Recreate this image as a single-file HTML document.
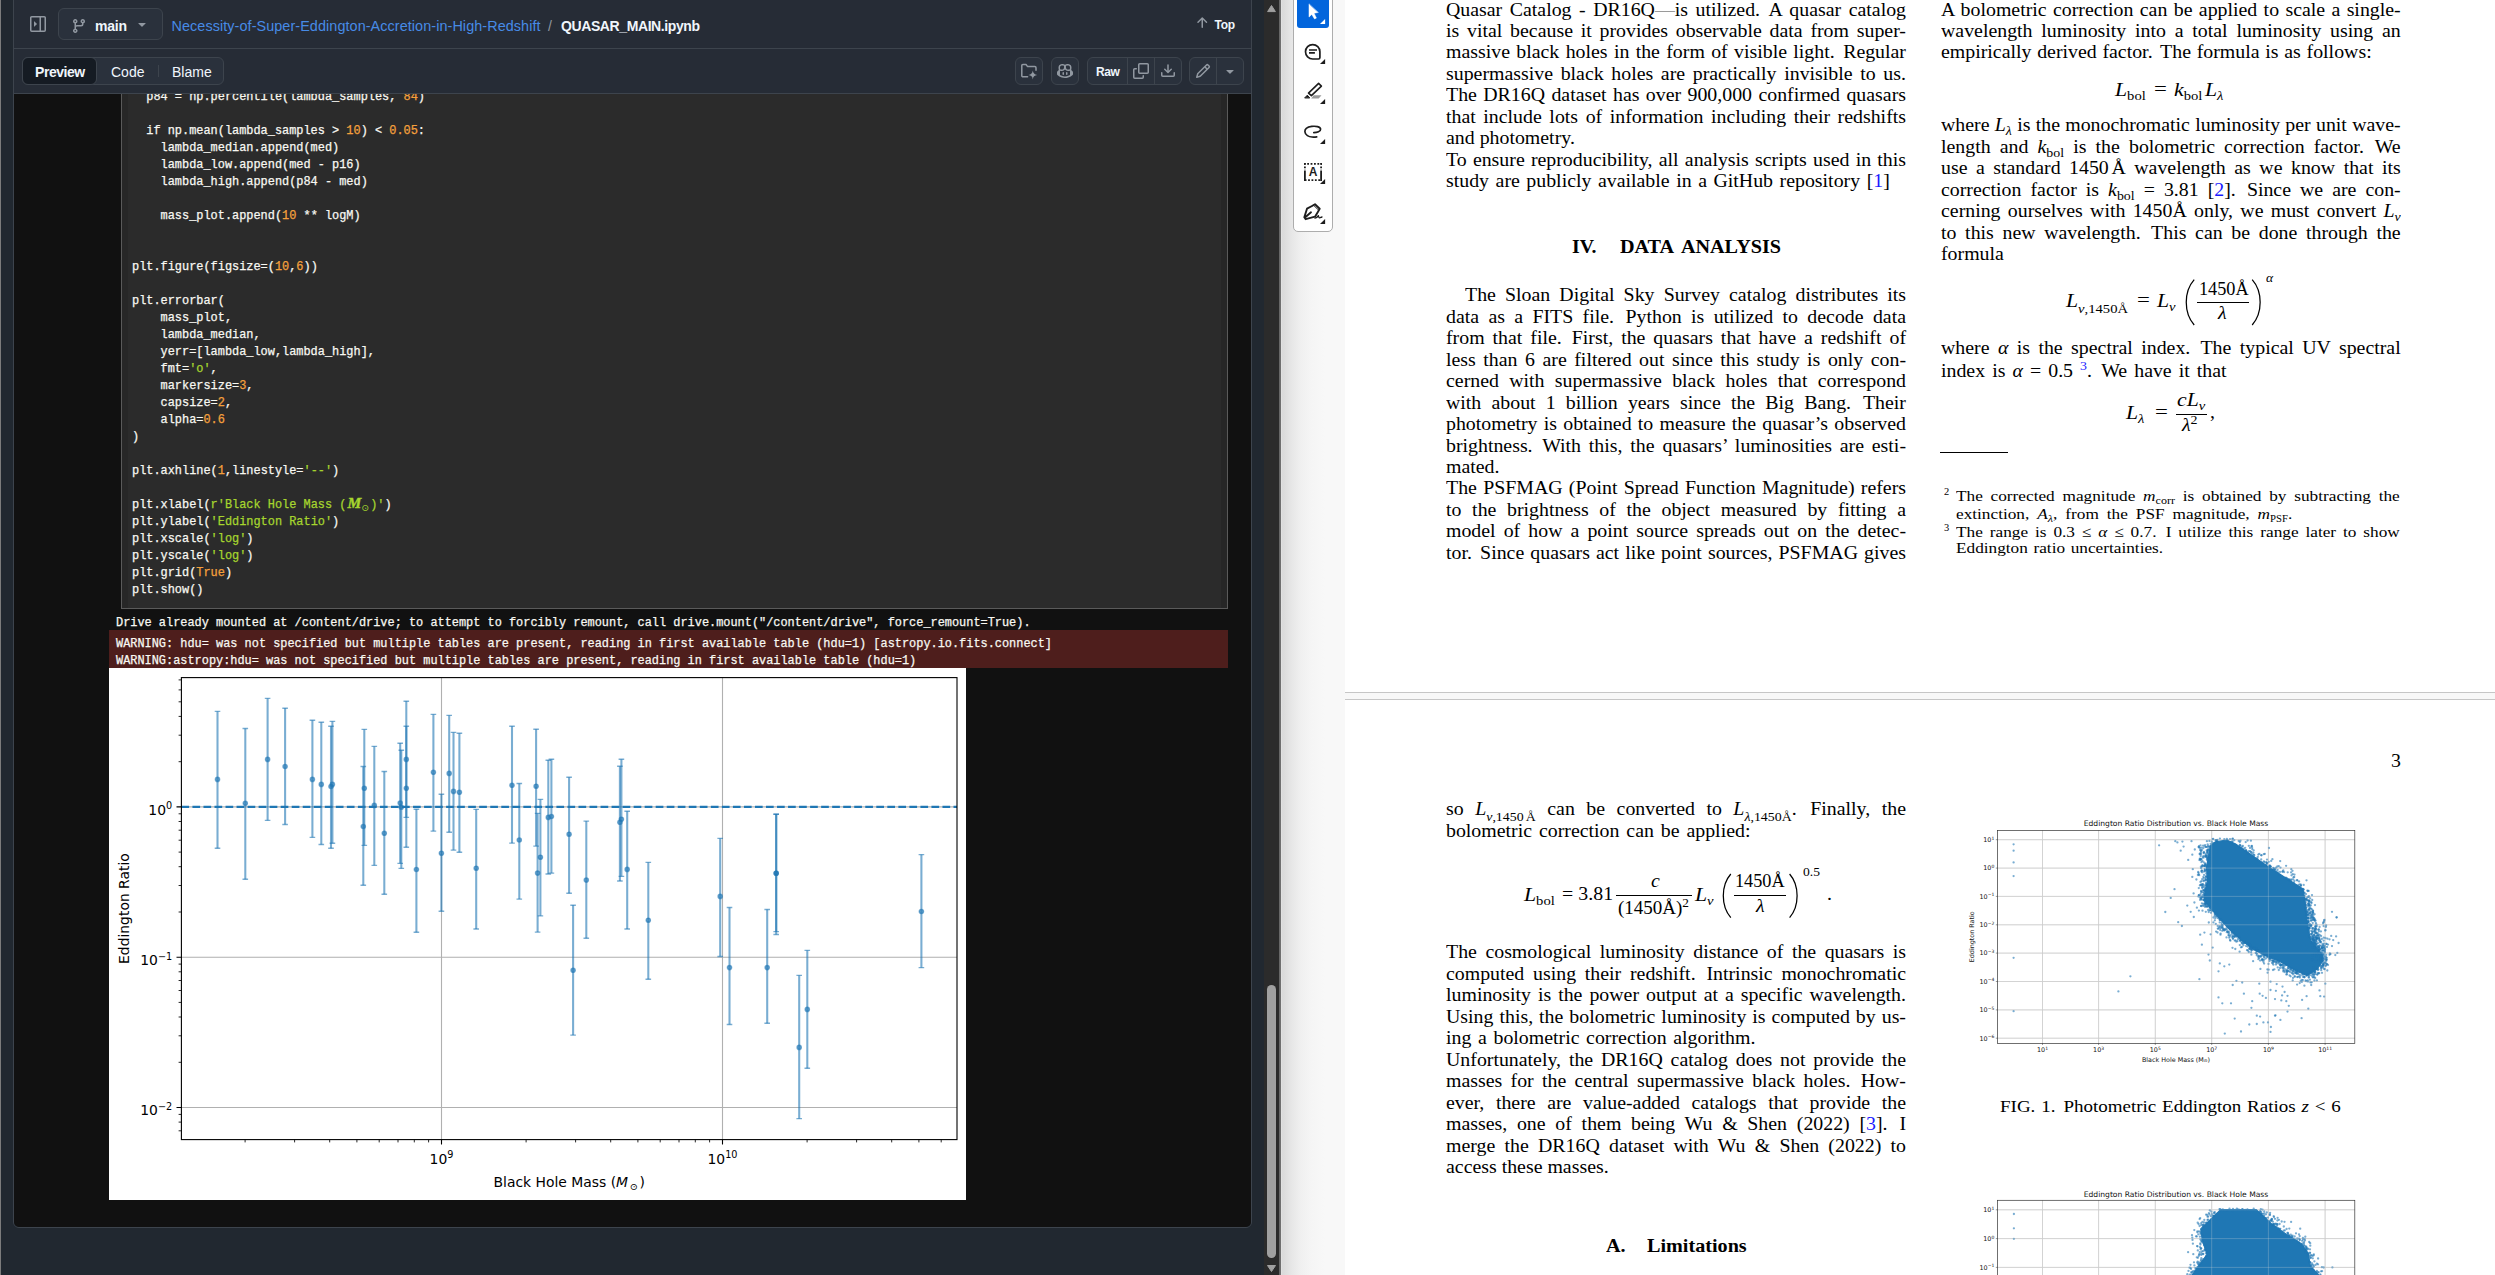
<!DOCTYPE html>
<html lang="en">
<head>
<meta charset="utf-8">
<title>QUASAR_MAIN.ipynb</title>
<style>
*{box-sizing:border-box;margin:0;padding:0}
html,body{width:2495px;height:1275px;overflow:hidden;background:#212830}
body{position:relative;font-family:"Liberation Sans",sans-serif;color:#f0f6fc}
.abs{position:absolute}
/* ---------- left : GitHub notebook view ---------- */
#gh{position:absolute;left:0;top:0;width:1264px;height:1275px;background:#212830;overflow:hidden}
#edge{position:absolute;left:0;top:0;width:1px;height:1275px;background:#7c7c7c}
#panel{position:absolute;left:13px;top:-8px;width:1239px;height:1236px;border:1px solid #3d444d;border-radius:6px;background:#212830}
#hdrline{position:absolute;left:14px;top:48px;width:1237px;height:1px;background:#3d444d}
#tbline{position:absolute;left:14px;top:93px;width:1237px;height:1px;background:#3d444d}
#nb{position:absolute;left:14px;top:94px;width:1237px;height:1133px;background:#111111;border-radius:0 0 5px 5px;overflow:hidden}
.btn{position:absolute;border:1px solid #3d444d;background:#2a313c;border-radius:6px}
.ico{position:absolute;width:16px;height:16px;fill:#9198a1}
.ui{position:absolute;white-space:nowrap;line-height:20px;font-size:14px}
.b{font-weight:bold}
#crumb{left:171.5px;top:16px;color:#478be6;font-size:14.4px;letter-spacing:0.08px}
#cell{position:absolute;left:107px;top:-20px;width:1107px;height:535px;background:#2b2b2b;border:1px solid #5a5a5a}
#cell:before{content:"";position:absolute;left:0;top:0;width:6px;height:100%;background:#272727}
#cell:after{content:"";position:absolute;right:0;top:0;width:6px;height:100%;background:#262626}
pre{font-family:"Liberation Mono",monospace;font-size:11.92px;line-height:17px;color:#f8f8f2;position:absolute;white-space:pre;-webkit-text-stroke:0.25px currentColor}
.n{color:#f5a03c}.s{color:#a6d52e}
.mj{font-family:"Liberation Serif",serif;font-style:italic;font-weight:bold;font-size:15.5px;line-height:0;letter-spacing:0;-webkit-text-stroke:0.4px currentColor;padding-left:1px}
.mo{font-size:9.5px;line-height:0;vertical-align:-3px;font-family:"DejaVu Sans",sans-serif;-webkit-text-stroke:0;padding-right:1px}
#err{position:absolute;left:95px;top:536px;width:1119px;height:38px;background:#4e1e1c}
#sb{position:absolute;left:1264px;top:0;width:15px;height:1275px;background:#2b2b2b}
#sbthumb{position:absolute;left:1267px;top:985px;width:9px;height:273px;border-radius:5px;background:#a0a0a0}
#divider{position:absolute;left:1279px;top:0;width:2px;height:1275px;background:linear-gradient(90deg,#4a4a4a 0,#787878 0.8px,#6a6a6a 100%)}
/* ---------- right : PDF viewer ---------- */
#gut{position:absolute;left:1281px;top:0;width:64px;height:1275px;background:linear-gradient(90deg,#e4e4e4 0,#dadada 1.6px,#e6e6e6 10px,#f0f0f0 20px,#f5f5f5 30px,#f8f8f8 44px,#f8f8f8 100%)}
#tools{position:absolute;left:1293px;top:-10px;width:40px;height:242px;background:#fff;border:1px solid #adadad;border-radius:0 0 5px 5px}
#sel{position:absolute;left:1297px;top:-4px;width:32px;height:32px;border-radius:3px;background:#0265dc}
#pg1{position:absolute;left:1345px;top:0;width:1150px;height:693px;background:#fff;border-bottom:1px solid #c6c6c6}
#pggap{position:absolute;left:1345px;top:693px;width:1150px;height:6px;background:#f8f8f8}
#pg2{position:absolute;left:1345px;top:699px;width:1150px;height:576px;background:#fff;border-top:1px solid #c6c6c6}
.tx{position:absolute;font-family:"Liberation Serif",serif;color:#000;white-space:nowrap;transform:scaleX(1.045);transform-origin:0 0}
.ln{position:absolute;font-family:"Liberation Serif",serif;color:#000;font-size:19px;line-height:22px;height:22px;text-align:justify;text-align-last:justify;white-space:nowrap;transform-origin:0 0}
.ln.l{text-align:left;text-align-last:left}
.fn{font-size:15px}
.sp{display:inline-block;width:2px}
.ln i,.tx i{font-style:italic}
.ln sub,.tx sub,.ln sup,.tx sup{font-size:70%;line-height:0;}
.ln sub,.tx sub{vertical-align:-0.28em}
.ln sub.d{vertical-align:-0.42em}
.lk{color:#1a1aff}
.em{color:#9a9a9a}
i.m{font-size:104%}
svg text{white-space:pre}
</style>
</head>
<body>
<div id="gh">
<div id="panel"></div>
<div id="nb">
 <div id="cell">
<pre style="left:10px;top:13.7px">  p84 = np.percentile(lambda_samples, <span class="n">84</span>)

  if np.mean(lambda_samples &gt; <span class="n">10</span>) &lt; <span class="n">0.05</span>:
    lambda_median.append(med)
    lambda_low.append(med - p16)
    lambda_high.append(p84 - med)

    mass_plot.append(<span class="n">10</span> ** logM)


plt.figure(figsize=(<span class="n">10</span>,<span class="n">6</span>))

plt.errorbar(
    mass_plot,
    lambda_median,
    yerr=[lambda_low,lambda_high],
    fmt=<span class="s">'o'</span>,
    markersize=<span class="n">3</span>,
    capsize=<span class="n">2</span>,
    alpha=<span class="n">0.6</span>
)

plt.axhline(<span class="n">1</span>,linestyle=<span class="s">'--'</span>)

plt.xlabel(<span class="s">r'Black Hole Mass (<span class="mj">M</span><span class="mo">⊙</span>)'</span>)
plt.ylabel(<span class="s">'Eddington Ratio'</span>)
plt.xscale(<span class="s">'log'</span>)
plt.yscale(<span class="s">'log'</span>)
plt.grid(<span class="n">True</span>)
plt.show()</pre>
 </div>
<pre style="left:102px;top:520.5px">Drive already mounted at /content/drive; to attempt to forcibly remount, call drive.mount("/content/drive", force_remount=True).</pre>
 <div id="err"></div>
<pre style="left:102px;top:542.1px;line-height:16.4px">WARNING: hdu= was not specified but multiple tables are present, reading in first available table (hdu=1) [astropy.io.fits.connect]
WARNING:astropy:hdu= was not specified but multiple tables are present, reading in first available table (hdu=1)</pre>
 <svg class="abs" style="left:95px;top:574px" width="857" height="532" viewBox="109 668 857 532" font-family="DejaVu Sans, sans-serif" font-size="13.9">
<rect x="109" y="668" width="857" height="532" fill="#fff"/>
<path d="M441.5 677.6V1139.6M722.5 677.6V1139.6M181.4 806.9H957.0M181.4 957.2H957.0M181.4 1107.5H957.0" stroke="#b0b0b0" stroke-width="1.1" fill="none"/>
<path d="M441.5 1139.6v4.9M722.5 1139.6v4.9M181.4 806.9h-4.9M181.4 957.2h-4.9M181.4 1107.5h-4.9" stroke="#000" stroke-width="1.1" fill="none"/>
<path d="M245.1 1139.6v2.8M294.6 1139.6v2.8M329.7 1139.6v2.8M356.9 1139.6v2.8M379.2 1139.6v2.8M398 1139.6v2.8M414.3 1139.6v2.8M428.6 1139.6v2.8M526.1 1139.6v2.8M575.6 1139.6v2.8M610.7 1139.6v2.8M637.9 1139.6v2.8M660.2 1139.6v2.8M679 1139.6v2.8M695.3 1139.6v2.8M709.6 1139.6v2.8M807.1 1139.6v2.8M856.6 1139.6v2.8M891.7 1139.6v2.8M918.9 1139.6v2.8M941.2 1139.6v2.8M181.4 761.7h-2.8M181.4 735.2h-2.8M181.4 716.4h-2.8M181.4 701.8h-2.8M181.4 689.9h-2.8M181.4 679.9h-2.8M181.4 912h-2.8M181.4 885.5h-2.8M181.4 866.7h-2.8M181.4 852.1h-2.8M181.4 840.2h-2.8M181.4 830.2h-2.8M181.4 821.5h-2.8M181.4 813.8h-2.8M181.4 1062.3h-2.8M181.4 1035.8h-2.8M181.4 1017h-2.8M181.4 1002.4h-2.8M181.4 990.5h-2.8M181.4 980.5h-2.8M181.4 971.8h-2.8M181.4 964.1h-2.8M181.4 1130.8h-2.8M181.4 1122.1h-2.8M181.4 1114.4h-2.8" stroke="#000" stroke-width="0.85" fill="none"/>
<g stroke="#1f77b4" fill="#1f77b4">
<path d="M217.5 711.4V848.3" stroke-width="2.08" fill="none" opacity="0.6"/><path d="M214.7 711.4h5.6M214.7 848.3h5.6" stroke-width="1.4" fill="none" opacity="0.6"/><circle cx="217.5" cy="779.4" r="2.1" stroke="none" opacity="0.6"/><circle cx="217.5" cy="779.4" r="2.1" fill="none" stroke-width="1.4" opacity="0.6"/>
<path d="M245.3 728.5V879.3" stroke-width="2.08" fill="none" opacity="0.6"/><path d="M242.5 728.5h5.6M242.5 879.3h5.6" stroke-width="1.4" fill="none" opacity="0.6"/><circle cx="245.3" cy="803.3" r="2.1" stroke="none" opacity="0.6"/><circle cx="245.3" cy="803.3" r="2.1" fill="none" stroke-width="1.4" opacity="0.6"/>
<path d="M267.6 698.4V820.4" stroke-width="2.08" fill="none" opacity="0.6"/><path d="M264.8 698.4h5.6M264.8 820.4h5.6" stroke-width="1.4" fill="none" opacity="0.6"/><circle cx="267.6" cy="759.4" r="2.1" stroke="none" opacity="0.6"/><circle cx="267.6" cy="759.4" r="2.1" fill="none" stroke-width="1.4" opacity="0.6"/>
<path d="M285.1 708.2V824.5" stroke-width="2.08" fill="none" opacity="0.6"/><path d="M282.3 708.2h5.6M282.3 824.5h5.6" stroke-width="1.4" fill="none" opacity="0.6"/><circle cx="285.1" cy="766.5" r="2.1" stroke="none" opacity="0.6"/><circle cx="285.1" cy="766.5" r="2.1" fill="none" stroke-width="1.4" opacity="0.6"/>
<path d="M312.4 720.3V837.4" stroke-width="2.08" fill="none" opacity="0.6"/><path d="M309.6 720.3h5.6M309.6 837.4h5.6" stroke-width="1.4" fill="none" opacity="0.6"/><circle cx="312.4" cy="779.4" r="2.1" stroke="none" opacity="0.6"/><circle cx="312.4" cy="779.4" r="2.1" fill="none" stroke-width="1.4" opacity="0.6"/>
<path d="M321.3 722.3V844.5" stroke-width="2.08" fill="none" opacity="0.6"/><path d="M318.5 722.3h5.6M318.5 844.5h5.6" stroke-width="1.4" fill="none" opacity="0.6"/><circle cx="321.3" cy="784.4" r="2.1" stroke="none" opacity="0.6"/><circle cx="321.3" cy="784.4" r="2.1" fill="none" stroke-width="1.4" opacity="0.6"/>
<path d="M331 726.2V848.3" stroke-width="2.08" fill="none" opacity="0.6"/><path d="M328.2 726.2h5.6M328.2 848.3h5.6" stroke-width="1.4" fill="none" opacity="0.6"/><circle cx="331" cy="786.5" r="2.1" stroke="none" opacity="0.6"/><circle cx="331" cy="786.5" r="2.1" fill="none" stroke-width="1.4" opacity="0.6"/>
<path d="M332.4 721.4V843.3" stroke-width="2.08" fill="none" opacity="0.6"/><path d="M329.6 721.4h5.6M329.6 843.3h5.6" stroke-width="1.4" fill="none" opacity="0.6"/><circle cx="332.4" cy="784.4" r="2.1" stroke="none" opacity="0.6"/><circle cx="332.4" cy="784.4" r="2.1" fill="none" stroke-width="1.4" opacity="0.6"/>
<path d="M364.3 729.4V845.4" stroke-width="2.08" fill="none" opacity="0.6"/><path d="M361.5 729.4h5.6M361.5 845.4h5.6" stroke-width="1.4" fill="none" opacity="0.6"/><circle cx="364.3" cy="788.3" r="2.1" stroke="none" opacity="0.6"/><circle cx="364.3" cy="788.3" r="2.1" fill="none" stroke-width="1.4" opacity="0.6"/>
<path d="M363.3 766.5V885.2" stroke-width="2.08" fill="none" opacity="0.6"/><path d="M360.5 766.5h5.6M360.5 885.2h5.6" stroke-width="1.4" fill="none" opacity="0.6"/><circle cx="363.3" cy="826.5" r="2.1" stroke="none" opacity="0.6"/><circle cx="363.3" cy="826.5" r="2.1" fill="none" stroke-width="1.4" opacity="0.6"/>
<path d="M374.3 746.4V865.4" stroke-width="2.08" fill="none" opacity="0.6"/><path d="M371.5 746.4h5.6M371.5 865.4h5.6" stroke-width="1.4" fill="none" opacity="0.6"/><circle cx="374.3" cy="805.4" r="2.1" stroke="none" opacity="0.6"/><circle cx="374.3" cy="805.4" r="2.1" fill="none" stroke-width="1.4" opacity="0.6"/>
<path d="M384.3 771.5V894.3" stroke-width="2.08" fill="none" opacity="0.6"/><path d="M381.5 771.5h5.6M381.5 894.3h5.6" stroke-width="1.4" fill="none" opacity="0.6"/><circle cx="384.3" cy="833.3" r="2.1" stroke="none" opacity="0.6"/><circle cx="384.3" cy="833.3" r="2.1" fill="none" stroke-width="1.4" opacity="0.6"/>
<path d="M400.2 743.2V863.4" stroke-width="2.08" fill="none" opacity="0.6"/><path d="M397.4 743.2h5.6M397.4 863.4h5.6" stroke-width="1.4" fill="none" opacity="0.6"/><circle cx="400.2" cy="803.1" r="2.1" stroke="none" opacity="0.6"/><circle cx="400.2" cy="803.1" r="2.1" fill="none" stroke-width="1.4" opacity="0.6"/>
<path d="M401.3 750.3V868.4" stroke-width="2.08" fill="none" opacity="0.6"/><path d="M398.5 750.3h5.6M398.5 868.4h5.6" stroke-width="1.4" fill="none" opacity="0.6"/><circle cx="401.3" cy="807.2" r="2.1" stroke="none" opacity="0.6"/><circle cx="401.3" cy="807.2" r="2.1" fill="none" stroke-width="1.4" opacity="0.6"/>
<path d="M406.3 701.2V817.4" stroke-width="2.08" fill="none" opacity="0.6"/><path d="M403.5 701.2h5.6M403.5 817.4h5.6" stroke-width="1.4" fill="none" opacity="0.6"/><circle cx="406.3" cy="759.4" r="2.1" stroke="none" opacity="0.6"/><circle cx="406.3" cy="759.4" r="2.1" fill="none" stroke-width="1.4" opacity="0.6"/>
<path d="M406.3 726.2V847.2" stroke-width="2.08" fill="none" opacity="0.6"/><path d="M403.5 726.2h5.6M403.5 847.2h5.6" stroke-width="1.4" fill="none" opacity="0.6"/><circle cx="406.3" cy="788.3" r="2.1" stroke="none" opacity="0.6"/><circle cx="406.3" cy="788.3" r="2.1" fill="none" stroke-width="1.4" opacity="0.6"/>
<path d="M416.4 809.2V932.3" stroke-width="2.08" fill="none" opacity="0.6"/><path d="M413.6 809.2h5.6M413.6 932.3h5.6" stroke-width="1.4" fill="none" opacity="0.6"/><circle cx="416.4" cy="869.5" r="2.1" stroke="none" opacity="0.6"/><circle cx="416.4" cy="869.5" r="2.1" fill="none" stroke-width="1.4" opacity="0.6"/>
<path d="M433.4 714.4V831.1" stroke-width="2.08" fill="none" opacity="0.6"/><path d="M430.6 714.4h5.6M430.6 831.1h5.6" stroke-width="1.4" fill="none" opacity="0.6"/><circle cx="433.4" cy="772.3" r="2.1" stroke="none" opacity="0.6"/><circle cx="433.4" cy="772.3" r="2.1" fill="none" stroke-width="1.4" opacity="0.6"/>
<path d="M441.4 794.2V911.2" stroke-width="2.08" fill="none" opacity="0.6"/><path d="M438.6 794.2h5.6M438.6 911.2h5.6" stroke-width="1.4" fill="none" opacity="0.6"/><circle cx="441.4" cy="853.2" r="2.1" stroke="none" opacity="0.6"/><circle cx="441.4" cy="853.2" r="2.1" fill="none" stroke-width="1.4" opacity="0.6"/>
<path d="M449.2 715.4V832.2" stroke-width="2.08" fill="none" opacity="0.6"/><path d="M446.4 715.4h5.6M446.4 832.2h5.6" stroke-width="1.4" fill="none" opacity="0.6"/><circle cx="449.2" cy="773.4" r="2.1" stroke="none" opacity="0.6"/><circle cx="449.2" cy="773.4" r="2.1" fill="none" stroke-width="1.4" opacity="0.6"/>
<path d="M453.5 732.4V850.1" stroke-width="2.08" fill="none" opacity="0.6"/><path d="M450.7 732.4h5.6M450.7 850.1h5.6" stroke-width="1.4" fill="none" opacity="0.6"/><circle cx="453.5" cy="791.4" r="2.1" stroke="none" opacity="0.6"/><circle cx="453.5" cy="791.4" r="2.1" fill="none" stroke-width="1.4" opacity="0.6"/>
<path d="M459.4 733.3V852.3" stroke-width="2.08" fill="none" opacity="0.6"/><path d="M456.6 733.3h5.6M456.6 852.3h5.6" stroke-width="1.4" fill="none" opacity="0.6"/><circle cx="459.4" cy="792.3" r="2.1" stroke="none" opacity="0.6"/><circle cx="459.4" cy="792.3" r="2.1" fill="none" stroke-width="1.4" opacity="0.6"/>
<path d="M476.2 809.4V929" stroke-width="2.08" fill="none" opacity="0.6"/><path d="M473.4 809.4h5.6M473.4 929h5.6" stroke-width="1.4" fill="none" opacity="0.6"/><circle cx="476.2" cy="868.2" r="2.1" stroke="none" opacity="0.6"/><circle cx="476.2" cy="868.2" r="2.1" fill="none" stroke-width="1.4" opacity="0.6"/>
<path d="M512 726.3V843.1" stroke-width="2.08" fill="none" opacity="0.6"/><path d="M509.2 726.3h5.6M509.2 843.1h5.6" stroke-width="1.4" fill="none" opacity="0.6"/><circle cx="512" cy="785.3" r="2.1" stroke="none" opacity="0.6"/><circle cx="512" cy="785.3" r="2.1" fill="none" stroke-width="1.4" opacity="0.6"/>
<path d="M519.3 783.5V899.1" stroke-width="2.08" fill="none" opacity="0.6"/><path d="M516.5 783.5h5.6M516.5 899.1h5.6" stroke-width="1.4" fill="none" opacity="0.6"/><circle cx="519.3" cy="840" r="2.1" stroke="none" opacity="0.6"/><circle cx="519.3" cy="840" r="2.1" fill="none" stroke-width="1.4" opacity="0.6"/>
<path d="M536.1 729.3V846.1" stroke-width="2.08" fill="none" opacity="0.6"/><path d="M533.3 729.3h5.6M533.3 846.1h5.6" stroke-width="1.4" fill="none" opacity="0.6"/><circle cx="536.1" cy="786.2" r="2.1" stroke="none" opacity="0.6"/><circle cx="536.1" cy="786.2" r="2.1" fill="none" stroke-width="1.4" opacity="0.6"/>
<path d="M537.6 813.4V932.1" stroke-width="2.08" fill="none" opacity="0.6"/><path d="M534.8 813.4h5.6M534.8 932.1h5.6" stroke-width="1.4" fill="none" opacity="0.6"/><circle cx="537.6" cy="873.1" r="2.1" stroke="none" opacity="0.6"/><circle cx="537.6" cy="873.1" r="2.1" fill="none" stroke-width="1.4" opacity="0.6"/>
<path d="M540.4 799.4V915.9" stroke-width="2.08" fill="none" opacity="0.6"/><path d="M537.6 799.4h5.6M537.6 915.9h5.6" stroke-width="1.4" fill="none" opacity="0.6"/><circle cx="540.4" cy="857.2" r="2.1" stroke="none" opacity="0.6"/><circle cx="540.4" cy="857.2" r="2.1" fill="none" stroke-width="1.4" opacity="0.6"/>
<path d="M548.3 760.2V874" stroke-width="2.08" fill="none" opacity="0.6"/><path d="M545.5 760.2h5.6M545.5 874h5.6" stroke-width="1.4" fill="none" opacity="0.6"/><circle cx="548.3" cy="817.4" r="2.1" stroke="none" opacity="0.6"/><circle cx="548.3" cy="817.4" r="2.1" fill="none" stroke-width="1.4" opacity="0.6"/>
<path d="M551.4 759.3V873.1" stroke-width="2.08" fill="none" opacity="0.6"/><path d="M548.6 759.3h5.6M548.6 873.1h5.6" stroke-width="1.4" fill="none" opacity="0.6"/><circle cx="551.4" cy="816.5" r="2.1" stroke="none" opacity="0.6"/><circle cx="551.4" cy="816.5" r="2.1" fill="none" stroke-width="1.4" opacity="0.6"/>
<path d="M569.1 777.3V893.2" stroke-width="2.08" fill="none" opacity="0.6"/><path d="M566.3 777.3h5.6M566.3 893.2h5.6" stroke-width="1.4" fill="none" opacity="0.6"/><circle cx="569.1" cy="834.2" r="2.1" stroke="none" opacity="0.6"/><circle cx="569.1" cy="834.2" r="2.1" fill="none" stroke-width="1.4" opacity="0.6"/>
<path d="M573.1 905.2V1035.1" stroke-width="2.08" fill="none" opacity="0.6"/><path d="M570.3 905.2h5.6M570.3 1035.1h5.6" stroke-width="1.4" fill="none" opacity="0.6"/><circle cx="573.1" cy="970.3" r="2.1" stroke="none" opacity="0.6"/><circle cx="573.1" cy="970.3" r="2.1" fill="none" stroke-width="1.4" opacity="0.6"/>
<path d="M586.3 821.1V938.2" stroke-width="2.08" fill="none" opacity="0.6"/><path d="M583.5 821.1h5.6M583.5 938.2h5.6" stroke-width="1.4" fill="none" opacity="0.6"/><circle cx="586.3" cy="880.1" r="2.1" stroke="none" opacity="0.6"/><circle cx="586.3" cy="880.1" r="2.1" fill="none" stroke-width="1.4" opacity="0.6"/>
<path d="M619.9 766.3V881" stroke-width="2.08" fill="none" opacity="0.6"/><path d="M617.1 766.3h5.6M617.1 881h5.6" stroke-width="1.4" fill="none" opacity="0.6"/><circle cx="619.9" cy="822.3" r="2.1" stroke="none" opacity="0.6"/><circle cx="619.9" cy="822.3" r="2.1" fill="none" stroke-width="1.4" opacity="0.6"/>
<path d="M621.4 759.3V876.4" stroke-width="2.08" fill="none" opacity="0.6"/><path d="M618.6 759.3h5.6M618.6 876.4h5.6" stroke-width="1.4" fill="none" opacity="0.6"/><circle cx="621.4" cy="819.2" r="2.1" stroke="none" opacity="0.6"/><circle cx="621.4" cy="819.2" r="2.1" fill="none" stroke-width="1.4" opacity="0.6"/>
<path d="M627.2 811.3V929" stroke-width="2.08" fill="none" opacity="0.6"/><path d="M624.4 811.3h5.6M624.4 929h5.6" stroke-width="1.4" fill="none" opacity="0.6"/><circle cx="627.2" cy="869.4" r="2.1" stroke="none" opacity="0.6"/><circle cx="627.2" cy="869.4" r="2.1" fill="none" stroke-width="1.4" opacity="0.6"/>
<path d="M648.3 862.4V979.2" stroke-width="2.08" fill="none" opacity="0.6"/><path d="M645.5 862.4h5.6M645.5 979.2h5.6" stroke-width="1.4" fill="none" opacity="0.6"/><circle cx="648.3" cy="920.2" r="2.1" stroke="none" opacity="0.6"/><circle cx="648.3" cy="920.2" r="2.1" fill="none" stroke-width="1.4" opacity="0.6"/>
<path d="M720.2 838.4V956.5" stroke-width="2.08" fill="none" opacity="0.6"/><path d="M717.4 838.4h5.6M717.4 956.5h5.6" stroke-width="1.4" fill="none" opacity="0.6"/><circle cx="720.2" cy="896.4" r="2.1" stroke="none" opacity="0.6"/><circle cx="720.2" cy="896.4" r="2.1" fill="none" stroke-width="1.4" opacity="0.6"/>
<path d="M729.5 907.5V1024.5" stroke-width="2.08" fill="none" opacity="0.6"/><path d="M726.7 907.5h5.6M726.7 1024.5h5.6" stroke-width="1.4" fill="none" opacity="0.6"/><circle cx="729.5" cy="967.6" r="2.1" stroke="none" opacity="0.6"/><circle cx="729.5" cy="967.6" r="2.1" fill="none" stroke-width="1.4" opacity="0.6"/>
<path d="M767.2 909.5V1023.3" stroke-width="2.08" fill="none" opacity="0.6"/><path d="M764.4 909.5h5.6M764.4 1023.3h5.6" stroke-width="1.4" fill="none" opacity="0.6"/><circle cx="767.2" cy="967.6" r="2.1" stroke="none" opacity="0.6"/><circle cx="767.2" cy="967.6" r="2.1" fill="none" stroke-width="1.4" opacity="0.6"/>
<path d="M776.2 814.3V934.5" stroke-width="2.08" fill="none" opacity="0.6"/><path d="M773.4 814.3h5.6M773.4 934.5h5.6" stroke-width="1.4" fill="none" opacity="0.6"/><circle cx="776.2" cy="873.2" r="2.1" stroke="none" opacity="0.6"/><circle cx="776.2" cy="873.2" r="2.1" fill="none" stroke-width="1.4" opacity="0.6"/>
<path d="M776.2 814.3V931.6" stroke-width="2.08" fill="none" opacity="0.6"/><path d="M773.4 814.3h5.6M773.4 931.6h5.6" stroke-width="1.4" fill="none" opacity="0.6"/><circle cx="776.2" cy="873.2" r="2.1" stroke="none" opacity="0.6"/><circle cx="776.2" cy="873.2" r="2.1" fill="none" stroke-width="1.4" opacity="0.6"/>
<path d="M799.2 975.4V1118.6" stroke-width="2.08" fill="none" opacity="0.6"/><path d="M796.4 975.4h5.6M796.4 1118.6h5.6" stroke-width="1.4" fill="none" opacity="0.6"/><circle cx="799.2" cy="1047.4" r="2.1" stroke="none" opacity="0.6"/><circle cx="799.2" cy="1047.4" r="2.1" fill="none" stroke-width="1.4" opacity="0.6"/>
<path d="M807.3 950.4V1068.3" stroke-width="2.08" fill="none" opacity="0.6"/><path d="M804.5 950.4h5.6M804.5 1068.3h5.6" stroke-width="1.4" fill="none" opacity="0.6"/><circle cx="807.3" cy="1009.4" r="2.1" stroke="none" opacity="0.6"/><circle cx="807.3" cy="1009.4" r="2.1" fill="none" stroke-width="1.4" opacity="0.6"/>
<path d="M921.4 854.6V967.6" stroke-width="2.08" fill="none" opacity="0.6"/><path d="M918.6 854.6h5.6M918.6 967.6h5.6" stroke-width="1.4" fill="none" opacity="0.6"/><circle cx="921.4" cy="911.5" r="2.1" stroke="none" opacity="0.6"/><circle cx="921.4" cy="911.5" r="2.1" fill="none" stroke-width="1.4" opacity="0.6"/>
</g>
<path d="M181.4 806.9H957.0" stroke="#1f77b4" stroke-width="2.08" stroke-dasharray="7.7 3.33" fill="none"/>
<rect x="181.4" y="677.6" width="775.6" height="462.0" fill="none" stroke="#000" stroke-width="1.1"/>
<text x="172.2" y="814.7" text-anchor="end">10<tspan dy="-5.3" font-size="9.7">0</tspan></text>
<text x="172.2" y="965" text-anchor="end">10<tspan dy="-5.3" font-size="9.7">−1</tspan></text>
<text x="172.2" y="1115.3" text-anchor="end">10<tspan dy="-5.3" font-size="9.7">−2</tspan></text>
<text x="441.5" y="1163.6" text-anchor="middle">10<tspan dy="-5.3" font-size="9.7">9</tspan></text>
<text x="722.5" y="1163.6" text-anchor="middle">10<tspan dy="-5.3" font-size="9.7">10</tspan></text>
<text x="569.2" y="1187" text-anchor="middle">Black Hole Mass (<tspan font-style="italic">M</tspan><tspan dy="2.6" dx="1.6" font-size="9.7">⊙</tspan><tspan dy="-2.6" dx="1.6">)</tspan></text>
<text transform="translate(129.3 908.6) rotate(-90)" text-anchor="middle">Eddington Ratio</text>
</svg>
</div>
<!-- sticky header -->
<div class="abs" style="left:14px;top:0;width:1237px;height:93px;background:#262c36"></div>
<div id="hdrline"></div><div id="tbline"></div>
<svg class="ico" style="left:30px;top:16px" viewBox="0 0 16 16"><path d="M1.75 0h12.5C15.216 0 16 .784 16 1.75v12.5A1.75 1.75 0 0 1 14.25 16H1.75A1.75 1.75 0 0 1 0 14.25V1.75C0 .784.784 0 1.75 0ZM1.5 1.75v12.5c0 .138.112.25.25.25H9.5v-13H1.75a.25.25 0 0 0-.25.25ZM11 14.5h3.25a.25.25 0 0 0 .25-.25V1.75a.25.25 0 0 0-.25-.25H11Z"/><path d="M6.823 7.823a.25.25 0 0 1 0 .354l-2.396 2.396A.25.25 0 0 1 4 10.396V5.604a.25.25 0 0 1 .427-.177Z"/></svg>
<div class="btn" style="left:58px;top:8px;width:105px;height:32px"></div>
<svg class="ico" style="left:71px;top:18px" viewBox="0 0 16 16"><path d="M9.5 3.25a2.25 2.25 0 1 1 3 2.122V6A2.5 2.5 0 0 1 10 8.5H6a1 1 0 0 0-1 1v1.128a2.251 2.251 0 1 1-1.5 0V5.372a2.25 2.25 0 1 1 1.5 0v1.836A2.493 2.493 0 0 1 6 7h4a1 1 0 0 0 1-1v-.628A2.25 2.25 0 0 1 9.5 3.25Zm-6 0a.75.75 0 1 0 1.5 0 .75.75 0 0 0-1.5 0Zm8.25-.75a.75.75 0 1 0 0 1.5.75.75 0 0 0 0-1.5ZM4.25 12a.75.75 0 1 0 0 1.5.75.75 0 0 0 0-1.5Z"/></svg>
<div class="ui b" style="left:95px;top:16px;letter-spacing:-0.2px">main</div>
<svg class="ico" style="left:134px;top:16px" viewBox="0 0 16 16"><path d="m4.427 7.427 3.396 3.396a.25.25 0 0 0 .354 0l3.396-3.396A.25.25 0 0 0 11.396 7H4.604a.25.25 0 0 0-.177.427Z"/></svg>
<div class="ui" id="crumb">Necessity-of-Super-Eddington-Accretion-in-High-Redshift</div>
<div class="ui" style="left:548px;top:16px;color:#9198a1">/</div>
<div class="ui b" style="left:561px;top:16px;font-size:14px;letter-spacing:-0.4px">QUASAR_MAIN.ipynb</div>
<svg class="ico" style="left:1194px;top:15px" viewBox="0 0 16 16"><path d="M3.47 7.78a.75.75 0 0 1 0-1.06l4.25-4.25a.75.75 0 0 1 1.06 0l4.25 4.25a.751.751 0 0 1-.018 1.042.751.751 0 0 1-1.042.018L9 4.81v7.44a.75.75 0 0 1-1.5 0V4.81L4.53 7.78a.75.75 0 0 1-1.06 0Z"/></svg>
<div class="ui b" style="left:1214.5px;top:15px;font-size:12px;letter-spacing:-0.3px">Top</div>
<!-- toolbar -->
<div class="btn" style="left:22px;top:57px;width:202px;height:28px;background:#2a313c"></div>
<div class="btn" style="left:22px;top:57px;width:75px;height:28px;background:#151b23;border-color:#3d444d"></div>
<div class="ui b" style="left:35px;top:62px;letter-spacing:-0.45px">Preview</div>
<div class="ui" style="left:111px;top:62px">Code</div>
<div class="abs" style="left:158px;top:65px;width:1px;height:12px;background:#3d444d"></div>
<div class="ui" style="left:172px;top:62px">Blame</div>
<div class="btn" style="left:1015px;top:57px;width:28px;height:28px"></div>
<svg class="ico" style="left:1021px;top:63px;overflow:visible;fill:none;stroke:#9198a1;stroke-width:1.5;stroke-linejoin:round;stroke-linecap:round" viewBox="0 0 16 16"><path d="M6.6 13.75H1.9a1.1 1.1 0 0 1-1.1-1.1V2.6a1.1 1.1 0 0 1 1.1-1.1H5l1.6 2.1h7.3a1.1 1.1 0 0 1 1.1 1.1V7.2"/><path d="M11.8 7.6Q12.2 11.6 16.2 12Q12.2 12.4 11.8 16.4Q11.4 12.4 7.4 12Q11.4 11.6 11.8 7.6Z" fill="#9198a1" stroke="none"/></svg>
<div class="btn" style="left:1051px;top:57px;width:28px;height:28px"></div>
<svg class="ico" style="left:1057px;top:63px" viewBox="0 0 16 16"><path d="M7.998 15.035c-4.562 0-7.873-2.914-7.998-3.749V9.338c.085-.628.677-1.686 1.588-2.065.013-.07.024-.143.036-.218.029-.183.06-.384.126-.612-.201-.508-.254-1.084-.254-1.656 0-.87.128-1.769.693-2.484.579-.733 1.494-1.124 2.724-1.261 1.206-.134 2.262.034 2.944.765.05.053.096.108.139.165.044-.057.094-.112.143-.165.682-.731 1.738-.899 2.944-.765 1.23.137 2.145.528 2.724 1.261.566.715.693 1.614.693 2.484 0 .572-.053 1.148-.254 1.656.066.228.098.429.126.612.012.076.024.148.037.218.924.385 1.522 1.471 1.591 2.095v1.872c0 .766-3.351 3.795-8.002 3.795Zm0-1.485c2.28 0 4.584-1.11 5.002-1.433V7.862l-.023-.116c-.49.21-1.075.291-1.727.291-1.146 0-2.059-.327-2.71-.991A3.222 3.222 0 0 1 8 6.303a3.24 3.24 0 0 1-.544.743c-.65.664-1.563.991-2.71.991-.652 0-1.236-.081-1.727-.291l-.023.116v4.255c.419.323 2.722 1.433 5.002 1.433ZM6.762 2.83c-.193-.206-.637-.413-1.682-.297-1.019.113-1.479.404-1.713.7-.247.312-.369.789-.369 1.554 0 .793.129 1.171.308 1.371.162.181.519.379 1.442.379.853 0 1.339-.235 1.638-.54.315-.322.527-.827.617-1.553.117-.935-.037-1.395-.241-1.614Zm4.155-.297c-1.044-.116-1.488.091-1.681.297-.204.219-.359.679-.242 1.614.091.726.303 1.231.618 1.553.299.305.784.54 1.638.54.922 0 1.28-.198 1.442-.379.179-.2.308-.578.308-1.371 0-.765-.123-1.242-.37-1.554-.233-.296-.693-.587-1.713-.7Z"/><path d="M6.25 9.037a.75.75 0 0 1 .75.75v1.501a.75.75 0 0 1-1.5 0V9.787a.75.75 0 0 1 .75-.75Zm4.25.75v1.501a.75.75 0 0 1-1.5 0V9.787a.75.75 0 0 1 1.5 0Z"/></svg>
<div class="btn" style="left:1087px;top:57px;width:95px;height:28px"></div>
<div class="abs" style="left:1127px;top:58px;width:1px;height:26px;background:#3d444d"></div>
<div class="abs" style="left:1154px;top:58px;width:1px;height:26px;background:#3d444d"></div>
<div class="ui b" style="left:1096px;top:62px;font-size:12px;letter-spacing:-0.45px">Raw</div>
<svg class="ico" style="left:1133px;top:63px" viewBox="0 0 16 16"><path d="M0 6.75C0 5.784.784 5 1.75 5h1.5a.75.75 0 0 1 0 1.5h-1.5a.25.25 0 0 0-.25.25v7.5c0 .138.112.25.25.25h7.5a.25.25 0 0 0 .25-.25v-1.5a.75.75 0 0 1 1.5 0v1.5A1.75 1.75 0 0 1 9.25 16h-7.5A1.75 1.75 0 0 1 0 14.25Z"/><path d="M5 1.75C5 .784 5.784 0 6.75 0h7.5C15.216 0 16 .784 16 1.75v7.5A1.75 1.75 0 0 1 14.25 11h-7.5A1.75 1.75 0 0 1 5 9.25Zm1.75-.25a.25.25 0 0 0-.25.25v7.5c0 .138.112.25.25.25h7.5a.25.25 0 0 0 .25-.25v-7.5a.25.25 0 0 0-.25-.25Z"/></svg>
<svg class="ico" style="left:1160px;top:63px" viewBox="0 0 16 16"><path d="M2.75 14A1.75 1.75 0 0 1 1 12.25v-2.5a.75.75 0 0 1 1.5 0v2.5c0 .138.112.25.25.25h10.5a.25.25 0 0 0 .25-.25v-2.5a.75.75 0 0 1 1.5 0v2.5A1.75 1.75 0 0 1 13.25 14Z"/><path d="M7.25 7.689V2a.75.75 0 0 1 1.5 0v5.689l1.97-1.969a.749.749 0 1 1 1.06 1.06l-3.25 3.25a.749.749 0 0 1-1.06 0L4.22 6.78a.749.749 0 1 1 1.06-1.06l1.97 1.969Z"/></svg>
<div class="btn" style="left:1189px;top:57px;width:55px;height:28px"></div>
<div class="abs" style="left:1216px;top:58px;width:1px;height:26px;background:#3d444d"></div>
<svg class="ico" style="left:1195px;top:63px" viewBox="0 0 16 16"><path d="M11.013 1.427a1.75 1.75 0 0 1 2.474 0l1.086 1.086a1.75 1.75 0 0 1 0 2.474l-8.61 8.61c-.21.21-.47.364-.756.445l-3.251.93a.75.75 0 0 1-.927-.928l.929-3.25c.081-.286.235-.547.445-.758l8.61-8.61Zm.176 4.823L9.75 4.81l-6.286 6.287a.253.253 0 0 0-.064.108l-.558 1.953 1.953-.558a.253.253 0 0 0 .108-.064Zm1.238-3.763a.25.25 0 0 0-.354 0L10.811 3.75l1.439 1.44 1.263-1.263a.25.25 0 0 0 0-.354Z"/></svg>
<svg class="ico" style="left:1222px;top:63px" viewBox="0 0 16 16"><path d="m4.427 7.427 3.396 3.396a.25.25 0 0 0 .354 0l3.396-3.396A.25.25 0 0 0 11.396 7H4.604a.25.25 0 0 0-.177.427Z"/></svg>
<div id="edge"></div>
</div>
<div id="sb"></div>
<svg class="abs" style="left:1264px;top:0;width:15px;height:1275px" viewBox="0 0 15 1275"><path d="M3.6 11.6 L7.5 5.5 L11.4 11.6Z" fill="#a0a0a0" stroke="#a0a0a0" stroke-width="1" stroke-linejoin="round"/><path d="M3.5 1265.5 L11.5 1265.5 L7.5 1271.5Z" fill="#a0a0a0" stroke="#a0a0a0" stroke-width="1" stroke-linejoin="round"/></svg>
<div id="sbthumb"></div>
<div id="divider"></div>
<div id="gut"></div><div id="pg1"></div><div id="pggap"></div><div id="pg2"></div>
<div id="tools"></div><div id="sel"></div>
<svg class="abs" style="left:1293px;top:0" width="40" height="232" viewBox="1293 0 40 232" fill="none" stroke="#1d1d1d" stroke-width="1.7" stroke-linecap="round" stroke-linejoin="round">
<path d="M1309 4.2V17.1L1311.8 14.4L1314.5 18.9L1316.4 18.1L1314.1 13.2L1318 12.5Z" fill="#fff" stroke="#fff" stroke-width="0.5"/>
<path d="M1325.1 19.0V23.9H1320Z" fill="#fff" stroke="none"/>
<path d="M1312.7 44.6a7.2 7.2 0 1 0 0 14.4h5.8a1.4 1.4 0 0 0 1.4-1.4v-5.8a7.2 7.2 0 0 0-7.2-7.2Z"/><path d="M1309 50h8M1309 52.9h5.9" stroke-width="1.65" stroke-linecap="butt"/>
<path d="M1325.1 59.0V63.9H1320Z" fill="#1d1d1d" stroke="none"/>
<path d="M1318.6 83.4l2.8 2.7-10 9.6-2.9-2.6Z" stroke-width="1.6"/><path d="M1304.9 97.7l2.4-2.5 2.2 2.5Z" fill="#1d1d1d" stroke-width="1"/><path d="M1313.7 95.2h7.8l-2.8 3.3h-7.5Z" fill="#9a9a9a" stroke="none"/>
<path d="M1325.1 99.0V103.9H1320Z" fill="#1d1d1d" stroke="none"/>
<path d="M1313.8 132.6C1317 132.6 1320.8 131.4 1320.6 129.2C1320.4 126.7 1315.5 125.9 1311.8 126.4C1307.5 127 1304.7 129.1 1304.9 131.8C1305.1 135.2 1309 136.9 1312 137C1314 137.1 1315.5 137 1316.7 136.8"/>
<path d="M1325.1 139.0V143.9H1320Z" fill="#1d1d1d" stroke="none"/>
<path d="M1304 163.9h18M1304.9 180.1h16.2" stroke-dasharray="1.8 1.6" stroke-linecap="butt" stroke-width="1.8" stroke-dashoffset="0.2"/><path d="M1304.9 163v7M1321.1 163v7" stroke-dasharray="1.8 1.6" stroke-linecap="butt" stroke-width="1.8"/><path d="M1304.9 170.6v10.4M1321.1 170.6v10.4" stroke-linecap="butt" stroke-width="1.8"/>
<text x="1313" y="176.2" font-family="Liberation Sans, sans-serif" font-weight="bold" font-size="12" text-anchor="middle" fill="#1d1d1d" stroke="none">A</text>
<path d="M1325.1 179.0V183.9H1320Z" fill="#1d1d1d" stroke="none"/>
<path d="M1312 206l3-1.8 4.7 4.5-1.7 3M1312 206l-5 2.7-2.7 8.6 1.4 1.9 9.3-2.5 3-5M1305 217.5l6-5.2" stroke-width="1.9"/><path d="M1313.5 205.2l4.6 4.4" stroke-width="1"/><path d="M1315 218.2c1.6-.2 2.8-1.6 3.4-2.6.3 1 .2 2 1.2 2.2.8.1 1.4-.6 2.4-.8" stroke-width="1.3"/>
<path d="M1325.1 219.0V223.9H1320Z" fill="#1d1d1d" stroke="none"/>
</svg>
<div class="ln" style="left:1446.4px;top:-1.51px;width:440.2px;transform:scaleX(1.045)">Quasar Catalog - DR16Q<span class='em'>—</span>is utilized.<span class="sp"></span> A quasar catalog</div>
<div class="ln" style="left:1446.4px;top:19.94px;width:440.2px;transform:scaleX(1.045)">is vital because it provides observable data from super-</div>
<div class="ln" style="left:1446.4px;top:41.39px;width:440.2px;transform:scaleX(1.045)">massive black holes in the form of visible light.<span class="sp"></span> Regular</div>
<div class="ln" style="left:1446.4px;top:62.84px;width:440.2px;transform:scaleX(1.045)">supermassive black holes are practically invisible to us.</div>
<div class="ln" style="left:1446.4px;top:84.29px;width:440.2px;transform:scaleX(1.045)">The DR16Q dataset has over 900,000 confirmed quasars</div>
<div class="ln" style="left:1446.4px;top:105.74px;width:440.2px;transform:scaleX(1.045)">that include lots of information including their redshifts</div>
<div class="ln l" style="left:1446.4px;top:127.19px;width:440.2px;transform:scaleX(1.045)">and photometry.</div>
<div class="ln" style="left:1446.4px;top:148.64px;width:440.2px;transform:scaleX(1.045)">To ensure reproducibility, all analysis scripts used in this</div>
<div class="ln" style="left:1446.4px;top:170.09px;width:424.7px;transform:scaleX(1.045)">study are publicly available in a GitHub repository [<span class='lk'>1</span>]</div>
<div class="ln" style="left:1571.7px;top:235.83px;width:24.4px;transform:scaleX(1.1);font-size:18px;line-height:22px;height:22px"><b>IV.</b></div>
<div class="ln" style="left:1619.6px;top:235.83px;width:143.8px;transform:scaleX(1.12);font-size:18px;line-height:22px;height:22px"><b>DATA ANALYSIS</b></div>
<div class="ln" style="left:1465.3px;top:284.39px;width:422.1px;transform:scaleX(1.045)">The Sloan Digital Sky Survey catalog distributes its</div>
<div class="ln" style="left:1446.4px;top:305.84px;width:440.2px;transform:scaleX(1.045)">data as a FITS file.<span class="sp"></span> Python is utilized to decode data</div>
<div class="ln" style="left:1446.4px;top:327.29px;width:440.2px;transform:scaleX(1.045)">from that file.<span class="sp"></span> First, the quasars that have a redshift of</div>
<div class="ln" style="left:1446.4px;top:348.74px;width:440.2px;transform:scaleX(1.045)">less than 6 are filtered out since this study is only con-</div>
<div class="ln" style="left:1446.4px;top:370.19px;width:440.2px;transform:scaleX(1.045)">cerned with supermassive black holes that correspond</div>
<div class="ln" style="left:1446.4px;top:391.64px;width:440.2px;transform:scaleX(1.045)">with about 1 billion years since the Big Bang.<span class="sp"></span> Their</div>
<div class="ln" style="left:1446.4px;top:413.09px;width:440.2px;transform:scaleX(1.045)">photometry is obtained to measure the quasar’s observed</div>
<div class="ln" style="left:1446.4px;top:434.54px;width:440.2px;transform:scaleX(1.045)">brightness.<span class="sp"></span> With this, the quasars’ luminosities are esti-</div>
<div class="ln l" style="left:1446.4px;top:455.99px;width:440.2px;transform:scaleX(1.045)">mated.</div>
<div class="ln" style="left:1446.4px;top:477.44px;width:440.2px;transform:scaleX(1.045)">The PSFMAG (Point Spread Function Magnitude) refers</div>
<div class="ln" style="left:1446.4px;top:498.89px;width:440.2px;transform:scaleX(1.045)">to the brightness of the object measured by fitting a</div>
<div class="ln" style="left:1446.4px;top:520.34px;width:440.2px;transform:scaleX(1.045)">model of how a point source spreads out on the detec-</div>
<div class="ln" style="left:1446.4px;top:541.79px;width:440.2px;transform:scaleX(1.045)">tor.<span class="sp"></span> Since quasars act like point sources, PSFMAG gives</div>
<div class="ln" style="left:1940.5px;top:-1.51px;width:439.9px;transform:scaleX(1.045)">A bolometric correction can be applied to scale a single-</div>
<div class="ln" style="left:1940.5px;top:19.89px;width:439.9px;transform:scaleX(1.045)">wavelength luminosity into a total luminosity using an</div>
<div class="ln" style="left:1940.5px;top:41.29px;width:412.1px;transform:scaleX(1.045)">empirically derived factor.<span class="sp"></span> The formula is as follows:</div>
<div class="ln" style="left:2115.2px;top:77.59px;width:28.5px;transform:scaleX(1.1)"><i class="m">L</i><sub class='r'>bol</sub></div>
<div class="tx" style="left:2154.3px;top:77.59px;font-size:19px;line-height:22px;transform:scaleX(1.2)">=</div>
<div class="ln" style="left:2173.6px;top:77.59px;width:26.2px;transform:scaleX(1.1)"><i class="m">k</i><sub class='r'>bol</sub></div>
<div class="ln" style="left:2205.0px;top:77.59px;width:18.1px;transform:scaleX(1.1)"><i class="m">L</i><sub><i>λ</i></sub></div>
<div class="ln" style="left:1940.5px;top:114.39px;width:439.9px;transform:scaleX(1.045)">where <i>L</i><sub><i>λ</i></sub> is the monochromatic luminosity per unit wave-</div>
<div class="ln" style="left:1940.5px;top:135.84px;width:439.9px;transform:scaleX(1.045)">length and <i>k</i><sub class='r'>bol</sub> is the bolometric correction factor.<span class="sp"></span> We</div>
<div class="ln" style="left:1940.5px;top:157.29px;width:439.9px;transform:scaleX(1.045)">use a standard 1450<span style='margin-left:2.5px'>Å</span> wavelength as we know that its</div>
<div class="ln" style="left:1940.5px;top:178.74px;width:439.9px;transform:scaleX(1.045)">correction factor is <i>k</i><sub class='r'>bol</sub> = 3.81 [<span class='lk'>2</span>].<span class="sp"></span> Since we are con-</div>
<div class="ln" style="left:1940.5px;top:200.19px;width:439.9px;transform:scaleX(1.045)">cerning ourselves with 1450Å only, we must convert <i>L</i><sub><i>ν</i></sub></div>
<div class="ln" style="left:1940.5px;top:221.64px;width:439.9px;transform:scaleX(1.045)">to this new wavelength.<span class="sp"></span> This can be done through the</div>
<div class="ln l" style="left:1940.5px;top:243.09px;width:439.9px;transform:scaleX(1.045)">formula</div>
<div class="ln" style="left:2065.8px;top:289.49px;width:58.3px;transform:scaleX(1.1)"><i class="m">L</i><sub class='d'><i>ν</i>,1450Å</sub></div>
<div class="tx" style="left:2136.9px;top:289.49px;font-size:19px;line-height:22px;transform:scaleX(1.2)">=</div>
<div class="ln" style="left:2156.7px;top:289.49px;width:18.5px;transform:scaleX(1.1)"><i class="m">L</i><sub><i>ν</i></sub></div>
<div class="ln" style="left:2198.6px;top:277.59px;width:51.0px;transform:scaleX(0.96)">1450Å</div>
<div class="abs" style="left:2197.2px;top:302px;width:51.8px;height:1px;background:#000"></div>
<div class="tx" style="left:2218.4px;top:301.99px;font-size:19px;line-height:22px;"><i>λ</i></div>
<svg class="abs" style="left:2184px;top:276px" width="80" height="52" viewBox="2184 276 80 52" fill="none" stroke="#000" stroke-width="1.25"><path d="M2194.2 279.6C2183.6 291.6 2183.6 313 2194.2 325"/><path d="M2252.2 279.6C2262.8 291.6 2262.8 313 2252.2 325"/></svg>
<div class="tx" style="left:2266.0px;top:267.31px;font-size:13px;line-height:22px;"><i>α</i></div>
<div class="ln" style="left:1940.5px;top:337.39px;width:439.9px;transform:scaleX(1.045)">where <i>α</i> is the spectral index.<span class="sp"></span> The typical UV spectral</div>
<div class="ln" style="left:1940.5px;top:359.59px;width:273.3px;transform:scaleX(1.045)">index is <i>α</i> = 0.5 <sup class='lk'>3</sup>.<span class="sp"></span> We have it that</div>
<div class="ln" style="left:2126.4px;top:401.29px;width:19.6px;transform:scaleX(1.1)"><i class="m">L</i><sub><i>λ</i></sub></div>
<div class="tx" style="left:2155.0px;top:401.29px;font-size:19px;line-height:22px;transform:scaleX(1.2)">=</div>
<div class="ln" style="left:2176.6px;top:388.29px;width:25.8px;transform:scaleX(1.1)"><i class="m">cL</i><sub><i>ν</i></sub></div>
<div class="abs" style="left:2176px;top:413.9px;width:30.9px;height:1px;background:#000"></div>
<div class="ln" style="left:2182.2px;top:414.49px;width:16.6px;transform:scaleX(1.045)"><i>λ</i><sup class='r'>2</sup></div>
<div class="tx" style="left:2209.6px;top:401.49px;font-size:19px;line-height:22px;">,</div>
<div class="abs" style="left:1940px;top:452px;width:68px;height:1px;background:#000"></div>
<div class="tx" style="left:1943.6px;top:481.23px;font-size:10px;line-height:22px;">2</div>
<div class="ln fn" style="left:1956.4px;top:486.74px;width:385.9px;transform:scaleX(1.15);font-size:15px;line-height:18px;height:18px">The corrected magnitude <i>m</i><sub class='r'>corr</sub> is obtained by subtracting the</div>
<div class="ln fn" style="left:1956.4px;top:504.54px;width:292.4px;transform:scaleX(1.15);font-size:15px;line-height:18px;height:18px">extinction, <i>A</i><sub><i>λ</i></sub>, from the PSF magnitude, <i>m</i><sub class='r' style='font-size:62%'>PSF</sub>.</div>
<div class="tx" style="left:1943.6px;top:517.12px;font-size:10px;line-height:22px;">3</div>
<div class="ln fn" style="left:1956.4px;top:522.54px;width:385.9px;transform:scaleX(1.15);font-size:15px;line-height:18px;height:18px">The range is 0.3 ≤ <i>α</i> ≤ 0.7.<span class="sp"></span> I utilize this range later to show</div>
<div class="ln fn" style="left:1956.4px;top:539.34px;width:180.1px;transform:scaleX(1.15);font-size:15px;line-height:18px;height:18px">Eddington ratio uncertainties.</div>
<div class="tx" style="left:2391.0px;top:750.19px;font-size:19px;line-height:22px;">3</div>
<div class="ln" style="left:1446.4px;top:798.39px;width:440.2px;transform:scaleX(1.045)">so <i>L</i><sub class='d'><i>ν</i>,1450<span style='margin-left:2px'>Å</span></sub> can be converted to <i>L</i><sub class='d'><i>λ</i>,1450Å</sub>.<span class="sp"></span> Finally, the</div>
<div class="ln" style="left:1446.4px;top:820.19px;width:291.3px;transform:scaleX(1.045)">bolometric correction can be applied:</div>
<div class="ln" style="left:1523.5px;top:882.99px;width:28.4px;transform:scaleX(1.1)"><i class="m">L</i><sub class='r'>bol</sub></div>
<div class="ln" style="left:1561.6px;top:882.99px;width:48.9px;transform:scaleX(1.045)">= 3.81</div>
<div class="tx" style="left:1650.5px;top:869.99px;font-size:19px;line-height:22px;"><i>c</i></div>
<div class="abs" style="left:1616.3px;top:894.7px;width:75.6px;height:1px;background:#000"></div>
<div class="ln" style="left:1617.9px;top:897.39px;width:71.6px;transform:scaleX(1.0)">(1450Å)<sup class='r'>2</sup></div>
<div class="ln" style="left:1694.8px;top:882.99px;width:17.1px;transform:scaleX(1.1)"><i class="m">L</i><sub><i>ν</i></sub></div>
<div class="ln" style="left:1735.4px;top:869.99px;width:51.3px;transform:scaleX(0.96)">1450Å</div>
<div class="abs" style="left:1734.1px;top:894.7px;width:51.8px;height:1px;background:#000"></div>
<div class="tx" style="left:1756.0px;top:894.69px;font-size:19px;line-height:22px;"><i>λ</i></div>
<svg class="abs" style="left:1720px;top:868px" width="82" height="54" viewBox="1720 868 82 54" fill="none" stroke="#000" stroke-width="1.25"><path d="M1730.8 874C1720.8 885.4 1720.8 906.2 1730.8 917.6"/><path d="M1789.6 874C1799.6 885.4 1799.6 906.2 1789.6 917.6"/></svg>
<div class="ln" style="left:1802.6px;top:862.91px;width:17.1px;transform:scaleX(1.045);font-size:13px;line-height:18px;height:18px">0.5</div>
<div class="tx" style="left:1826.6px;top:882.99px;font-size:19px;line-height:22px;">.</div>
<div class="ln" style="left:1446.4px;top:941.39px;width:440.2px;transform:scaleX(1.045)">The cosmological luminosity distance of the quasars is</div>
<div class="ln" style="left:1446.4px;top:962.86px;width:440.2px;transform:scaleX(1.045)">computed using their redshift.<span class="sp"></span> Intrinsic monochromatic</div>
<div class="ln" style="left:1446.4px;top:984.33px;width:440.2px;transform:scaleX(1.045)">luminosity is the power output at a specific wavelength.</div>
<div class="ln" style="left:1446.4px;top:1005.80px;width:440.2px;transform:scaleX(1.045)">Using this, the bolometric luminosity is computed by us-</div>
<div class="ln" style="left:1446.4px;top:1027.27px;width:296.1px;transform:scaleX(1.045)">ing a bolometric correction algorithm.</div>
<div class="ln" style="left:1446.4px;top:1048.74px;width:440.2px;transform:scaleX(1.045)">Unfortunately, the DR16Q catalog does not provide the</div>
<div class="ln" style="left:1446.4px;top:1070.21px;width:440.2px;transform:scaleX(1.045)">masses for the central supermassive black holes.<span class="sp"></span> How-</div>
<div class="ln" style="left:1446.4px;top:1091.68px;width:440.2px;transform:scaleX(1.045)">ever, there are value-added catalogs that provide the</div>
<div class="ln" style="left:1446.4px;top:1113.15px;width:440.2px;transform:scaleX(1.045)">masses, one of them being Wu &amp; Shen (2022) [<span class='lk'>3</span>].<span class="sp"></span> I</div>
<div class="ln" style="left:1446.4px;top:1134.62px;width:440.2px;transform:scaleX(1.045)">merge the DR16Q dataset with Wu &amp; Shen (2022) to</div>
<div class="ln" style="left:1446.4px;top:1156.09px;width:155.6px;transform:scaleX(1.045)">access these masses.</div>
<div class="ln" style="left:1606.0px;top:1234.92px;width:18.2px;transform:scaleX(1.12);font-size:18px;line-height:22px;height:22px"><b>A.</b></div>
<div class="ln" style="left:1647.3px;top:1234.92px;width:88.2px;transform:scaleX(1.12);font-size:18px;line-height:22px;height:22px"><b>Limitations</b></div>
<div class="ln" style="left:1999.5px;top:1094.99px;width:314.0px;transform:scaleX(1.085);font-size:17.5px;line-height:22px;height:22px">FIG. 1.<span class="sp"></span> Photometric Eddington Ratios <i>z</i> &lt; 6</div>
<svg class="abs" style="left:1940px;top:800px" width="470" height="475" viewBox="1940 800 470 475" font-family="DejaVu Sans, sans-serif">
<path d="M2042.5 830.4V1043.4M2098.6 830.4V1043.4M2155.3 830.4V1043.4M2211.7 830.4V1043.4M2268.4 830.4V1043.4M2325.1 830.4V1043.4M1997.4 839.7H2354.8M1997.4 868.1H2354.8M1997.4 896.4H2354.8M1997.4 924.8H2354.8M1997.4 953.1H2354.8M1997.4 981.5H2354.8M1997.4 1009.9H2354.8M1997.4 1038.2H2354.8" stroke="#c2c2c2" stroke-width="0.75" fill="none"/>
<path d="M2210.2 846.3 L2215.2 841.9 L2226.5 840 L2235.3 843.8 L2247.8 852.6 L2267.9 866.4 L2285.5 877.7 L2303 889 L2305.6 905.3 L2307.4 924.1 L2310.6 940.4 L2321.9 954.2 L2323.1 960.5 L2316.9 969.3 L2306.8 975.5 L2295.5 970.5 L2280.4 961.7 L2267.9 956.7 L2255.4 950.5 L2241.6 940.4 L2230.3 930.4 L2219 917.8 L2210.2 907.8 L2203.9 900.3 L2205.2 890.2 L2207.7 880.2 L2206.4 867.6 L2208.9 855.1Z" fill="#1f77b4" stroke="#1f77b4" stroke-width="1.2" stroke-linejoin="round"/>
<g fill="#1f77b4" fill-opacity="0.6"><circle cx="2209.4" cy="840.9" r="1.15"/><circle cx="2212.4" cy="843.4" r="1.15"/><circle cx="2209.3" cy="846.9" r="1.15"/><circle cx="2213.4" cy="843.2" r="1.15"/><circle cx="2211.2" cy="845.7" r="1.15"/><circle cx="2211.8" cy="841.6" r="1.15"/><circle cx="2212.7" cy="839.1" r="1.15"/><circle cx="2206.9" cy="841.2" r="1.15"/><circle cx="2210.7" cy="843.8" r="1.15"/><circle cx="2213.2" cy="839" r="1.15"/><circle cx="2217.3" cy="839.8" r="1.15"/><circle cx="2216.7" cy="841.9" r="1.15"/><circle cx="2219.9" cy="838.6" r="1.15"/><circle cx="2216.5" cy="842.4" r="1.15"/><circle cx="2224.3" cy="839.1" r="1.15"/><circle cx="2216.1" cy="840.2" r="1.15"/><circle cx="2215.5" cy="840.2" r="1.15"/><circle cx="2217.2" cy="840.4" r="1.15"/><circle cx="2223.6" cy="840.8" r="1.15"/><circle cx="2216.5" cy="840.4" r="1.15"/><circle cx="2227.6" cy="840.1" r="1.15"/><circle cx="2226.9" cy="838.9" r="1.15"/><circle cx="2231.8" cy="841.7" r="1.15"/><circle cx="2233.9" cy="844.1" r="1.15"/><circle cx="2232.6" cy="841.4" r="1.15"/><circle cx="2231.8" cy="843" r="1.15"/><circle cx="2230.4" cy="842.3" r="1.15"/><circle cx="2227.1" cy="840.4" r="1.15"/><circle cx="2232.4" cy="838.9" r="1.15"/><circle cx="2230" cy="839.1" r="1.15"/><circle cx="2232.9" cy="838.7" r="1.15"/><circle cx="2234.3" cy="840.2" r="1.15"/><circle cx="2239.8" cy="844.9" r="1.15"/><circle cx="2242.9" cy="846" r="1.15"/><circle cx="2238.7" cy="840.9" r="1.15"/><circle cx="2245.9" cy="850.5" r="1.15"/><circle cx="2246" cy="850.5" r="1.15"/><circle cx="2243.8" cy="848.6" r="1.15"/><circle cx="2241.4" cy="848" r="1.15"/><circle cx="2239.9" cy="845.6" r="1.15"/><circle cx="2240" cy="847.7" r="1.15"/><circle cx="2241.9" cy="846.7" r="1.15"/><circle cx="2246.2" cy="850.6" r="1.15"/><circle cx="2247.3" cy="852" r="1.15"/><circle cx="2248.9" cy="851.1" r="1.15"/><circle cx="2240.4" cy="845.3" r="1.15"/><circle cx="2247.6" cy="840.5" r="1.15"/><circle cx="2239.8" cy="842.1" r="1.15"/><circle cx="2240.5" cy="840.7" r="1.15"/><circle cx="2250.9" cy="840.7" r="1.15"/><circle cx="2250" cy="847.9" r="1.15"/><circle cx="2245.2" cy="847.8" r="1.15"/><circle cx="2248.8" cy="845.8" r="1.15"/><circle cx="2251.5" cy="846.2" r="1.15"/><circle cx="2251.9" cy="846" r="1.15"/><circle cx="2245.7" cy="842.1" r="1.15"/><circle cx="2266.7" cy="863.7" r="1.15"/><circle cx="2248.4" cy="854.1" r="1.15"/><circle cx="2253.9" cy="857.1" r="1.15"/><circle cx="2254.3" cy="855.2" r="1.15"/><circle cx="2264.3" cy="862.1" r="1.15"/><circle cx="2261.2" cy="859.5" r="1.15"/><circle cx="2253.8" cy="855" r="1.15"/><circle cx="2251.4" cy="853.3" r="1.15"/><circle cx="2266.1" cy="862.2" r="1.15"/><circle cx="2256.7" cy="858.5" r="1.15"/><circle cx="2266.4" cy="864.6" r="1.15"/><circle cx="2257.8" cy="856.9" r="1.15"/><circle cx="2248.5" cy="853.6" r="1.15"/><circle cx="2263.9" cy="861.5" r="1.15"/><circle cx="2251.5" cy="852.2" r="1.15"/><circle cx="2252.6" cy="854.5" r="1.15"/><circle cx="2250.2" cy="851.2" r="1.15"/><circle cx="2257.4" cy="858.8" r="1.15"/><circle cx="2253.4" cy="852.7" r="1.15"/><circle cx="2247.8" cy="853.1" r="1.15"/><circle cx="2262" cy="862.3" r="1.15"/><circle cx="2267.1" cy="863.2" r="1.15"/><circle cx="2266.7" cy="862.6" r="1.15"/><circle cx="2252.3" cy="849.2" r="1.15"/><circle cx="2252.1" cy="847.6" r="1.15"/><circle cx="2268.8" cy="861.8" r="1.15"/><circle cx="2264.8" cy="853.9" r="1.15"/><circle cx="2269" cy="848" r="1.15"/><circle cx="2272.4" cy="859.2" r="1.15"/><circle cx="2259.3" cy="853.8" r="1.15"/><circle cx="2258.3" cy="854.6" r="1.15"/><circle cx="2261.6" cy="855.3" r="1.15"/><circle cx="2271.2" cy="860.9" r="1.15"/><circle cx="2267" cy="859.6" r="1.15"/><circle cx="2253.7" cy="850.3" r="1.15"/><circle cx="2250.6" cy="851.8" r="1.15"/><circle cx="2261.1" cy="855.2" r="1.15"/><circle cx="2263.8" cy="854.2" r="1.15"/><circle cx="2274" cy="868.5" r="1.15"/><circle cx="2285.9" cy="877.7" r="1.15"/><circle cx="2269.9" cy="868" r="1.15"/><circle cx="2284.6" cy="878.2" r="1.15"/><circle cx="2280" cy="871.9" r="1.15"/><circle cx="2270.3" cy="866.7" r="1.15"/><circle cx="2280.1" cy="874.9" r="1.15"/><circle cx="2273.2" cy="867.8" r="1.15"/><circle cx="2275" cy="869.6" r="1.15"/><circle cx="2273.5" cy="869.5" r="1.15"/><circle cx="2269.5" cy="866" r="1.15"/><circle cx="2269.8" cy="865.5" r="1.15"/><circle cx="2275.2" cy="869.5" r="1.15"/><circle cx="2269.4" cy="866.7" r="1.15"/><circle cx="2276.2" cy="871.4" r="1.15"/><circle cx="2278" cy="872.3" r="1.15"/><circle cx="2269.8" cy="866.4" r="1.15"/><circle cx="2273.6" cy="869.6" r="1.15"/><circle cx="2270.5" cy="866.6" r="1.15"/><circle cx="2283.3" cy="870.5" r="1.15"/><circle cx="2286.1" cy="865.8" r="1.15"/><circle cx="2278.8" cy="866.2" r="1.15"/><circle cx="2280.2" cy="861.1" r="1.15"/><circle cx="2276" cy="867.7" r="1.15"/><circle cx="2277.3" cy="866.5" r="1.15"/><circle cx="2280.5" cy="867.6" r="1.15"/><circle cx="2270.9" cy="866.6" r="1.15"/><circle cx="2277.6" cy="869.9" r="1.15"/><circle cx="2287.7" cy="872.3" r="1.15"/><circle cx="2284.1" cy="872.1" r="1.15"/><circle cx="2282.4" cy="871.8" r="1.15"/><circle cx="2282.7" cy="871.4" r="1.15"/><circle cx="2289" cy="879.4" r="1.15"/><circle cx="2299.1" cy="881.4" r="1.15"/><circle cx="2303.7" cy="889.6" r="1.15"/><circle cx="2299.8" cy="884.3" r="1.15"/><circle cx="2300.8" cy="885.6" r="1.15"/><circle cx="2288.2" cy="879.8" r="1.15"/><circle cx="2286.9" cy="878.1" r="1.15"/><circle cx="2294" cy="882.3" r="1.15"/><circle cx="2289.2" cy="879.6" r="1.15"/><circle cx="2291.1" cy="879.4" r="1.15"/><circle cx="2299.5" cy="887.3" r="1.15"/><circle cx="2303.4" cy="889.5" r="1.15"/><circle cx="2300.9" cy="885.8" r="1.15"/><circle cx="2289.4" cy="880.3" r="1.15"/><circle cx="2298.4" cy="884.9" r="1.15"/><circle cx="2297" cy="880.1" r="1.15"/><circle cx="2288.1" cy="879.5" r="1.15"/><circle cx="2291" cy="880.4" r="1.15"/><circle cx="2303.7" cy="884.9" r="1.15"/><circle cx="2291.1" cy="872.4" r="1.15"/><circle cx="2297.3" cy="880.4" r="1.15"/><circle cx="2294.2" cy="877" r="1.15"/><circle cx="2294.5" cy="880.7" r="1.15"/><circle cx="2292.9" cy="879.4" r="1.15"/><circle cx="2301" cy="884.7" r="1.15"/><circle cx="2292.8" cy="874.2" r="1.15"/><circle cx="2291.3" cy="869.2" r="1.15"/><circle cx="2294.5" cy="874.6" r="1.15"/><circle cx="2293.4" cy="877.4" r="1.15"/><circle cx="2291.5" cy="875.3" r="1.15"/><circle cx="2306.5" cy="880.3" r="1.15"/><circle cx="2292.5" cy="870.8" r="1.15"/><circle cx="2304.8" cy="899.9" r="1.15"/><circle cx="2304.4" cy="892.9" r="1.15"/><circle cx="2307.7" cy="903.8" r="1.15"/><circle cx="2306" cy="894.1" r="1.15"/><circle cx="2305.7" cy="904.7" r="1.15"/><circle cx="2305.9" cy="899.7" r="1.15"/><circle cx="2305.8" cy="902.1" r="1.15"/><circle cx="2304.6" cy="895.9" r="1.15"/><circle cx="2304.3" cy="900.6" r="1.15"/><circle cx="2304.3" cy="892.7" r="1.15"/><circle cx="2303.5" cy="895.1" r="1.15"/><circle cx="2305.8" cy="899.1" r="1.15"/><circle cx="2304.6" cy="902.4" r="1.15"/><circle cx="2304.2" cy="898.7" r="1.15"/><circle cx="2302.9" cy="888.9" r="1.15"/><circle cx="2307" cy="900.2" r="1.15"/><circle cx="2307.8" cy="891" r="1.15"/><circle cx="2308.7" cy="890.9" r="1.15"/><circle cx="2310.2" cy="898.3" r="1.15"/><circle cx="2307.4" cy="890.6" r="1.15"/><circle cx="2312" cy="895.1" r="1.15"/><circle cx="2312.2" cy="900" r="1.15"/><circle cx="2309.3" cy="901.2" r="1.15"/><circle cx="2308.6" cy="903" r="1.15"/><circle cx="2308.9" cy="896.1" r="1.15"/><circle cx="2309.4" cy="902.2" r="1.15"/><circle cx="2308.4" cy="918.9" r="1.15"/><circle cx="2306.9" cy="912.2" r="1.15"/><circle cx="2307.5" cy="911.7" r="1.15"/><circle cx="2307.9" cy="921.3" r="1.15"/><circle cx="2307.3" cy="914.9" r="1.15"/><circle cx="2306.6" cy="905.5" r="1.15"/><circle cx="2307.7" cy="922.2" r="1.15"/><circle cx="2306.5" cy="922.2" r="1.15"/><circle cx="2306.5" cy="914.5" r="1.15"/><circle cx="2310.2" cy="912.9" r="1.15"/><circle cx="2305.3" cy="909.5" r="1.15"/><circle cx="2305.6" cy="910.5" r="1.15"/><circle cx="2308.7" cy="918" r="1.15"/><circle cx="2308.9" cy="909.3" r="1.15"/><circle cx="2307.7" cy="911.8" r="1.15"/><circle cx="2311" cy="917.9" r="1.15"/><circle cx="2308.7" cy="913.3" r="1.15"/><circle cx="2308.4" cy="920.9" r="1.15"/><circle cx="2310.5" cy="911.5" r="1.15"/><circle cx="2315" cy="905.1" r="1.15"/><circle cx="2312.8" cy="912.2" r="1.15"/><circle cx="2313.4" cy="917.4" r="1.15"/><circle cx="2314.3" cy="919.8" r="1.15"/><circle cx="2314.6" cy="914.2" r="1.15"/><circle cx="2312.7" cy="919.5" r="1.15"/><circle cx="2314.1" cy="918.1" r="1.15"/><circle cx="2311" cy="908.6" r="1.15"/><circle cx="2309.2" cy="905" r="1.15"/><circle cx="2310" cy="915.8" r="1.15"/><circle cx="2308.2" cy="914.7" r="1.15"/><circle cx="2308" cy="927.7" r="1.15"/><circle cx="2309.1" cy="927.9" r="1.15"/><circle cx="2310.9" cy="934.1" r="1.15"/><circle cx="2309.1" cy="927.4" r="1.15"/><circle cx="2309.4" cy="925.7" r="1.15"/><circle cx="2309.8" cy="936.8" r="1.15"/><circle cx="2308.6" cy="924.6" r="1.15"/><circle cx="2310.3" cy="925" r="1.15"/><circle cx="2308.7" cy="928.2" r="1.15"/><circle cx="2308" cy="929.4" r="1.15"/><circle cx="2311.3" cy="934.2" r="1.15"/><circle cx="2311.3" cy="930.9" r="1.15"/><circle cx="2309" cy="927.6" r="1.15"/><circle cx="2309" cy="931.9" r="1.15"/><circle cx="2311.1" cy="937.9" r="1.15"/><circle cx="2308.7" cy="924.9" r="1.15"/><circle cx="2312.3" cy="936.2" r="1.15"/><circle cx="2319.6" cy="926.9" r="1.15"/><circle cx="2316.1" cy="937.6" r="1.15"/><circle cx="2312.6" cy="938.9" r="1.15"/><circle cx="2315.4" cy="931.4" r="1.15"/><circle cx="2310.7" cy="925.9" r="1.15"/><circle cx="2315.7" cy="928.5" r="1.15"/><circle cx="2315.4" cy="926.1" r="1.15"/><circle cx="2311" cy="925.9" r="1.15"/><circle cx="2315.3" cy="928.9" r="1.15"/><circle cx="2314.7" cy="943.6" r="1.15"/><circle cx="2318.8" cy="952.8" r="1.15"/><circle cx="2312" cy="943.8" r="1.15"/><circle cx="2313.7" cy="940" r="1.15"/><circle cx="2315.5" cy="943.7" r="1.15"/><circle cx="2318.5" cy="949.7" r="1.15"/><circle cx="2314.1" cy="941.2" r="1.15"/><circle cx="2314.8" cy="945.3" r="1.15"/><circle cx="2318.6" cy="946.9" r="1.15"/><circle cx="2319.5" cy="945.8" r="1.15"/><circle cx="2318.8" cy="949.6" r="1.15"/><circle cx="2319.5" cy="950" r="1.15"/><circle cx="2323.6" cy="950.2" r="1.15"/><circle cx="2314.8" cy="945.6" r="1.15"/><circle cx="2318.3" cy="949.8" r="1.15"/><circle cx="2319.4" cy="949.8" r="1.15"/><circle cx="2321.5" cy="953.1" r="1.15"/><circle cx="2326.4" cy="943.9" r="1.15"/><circle cx="2316.3" cy="938.5" r="1.15"/><circle cx="2316.4" cy="941.5" r="1.15"/><circle cx="2315" cy="943" r="1.15"/><circle cx="2317.6" cy="937.9" r="1.15"/><circle cx="2313.1" cy="939.5" r="1.15"/><circle cx="2319.8" cy="945.5" r="1.15"/><circle cx="2324.5" cy="948.1" r="1.15"/><circle cx="2316.4" cy="944.2" r="1.15"/><circle cx="2321.9" cy="948.1" r="1.15"/><circle cx="2328" cy="944.6" r="1.15"/><circle cx="2320.9" cy="957.7" r="1.15"/><circle cx="2324.7" cy="955.9" r="1.15"/><circle cx="2325.5" cy="959.2" r="1.15"/><circle cx="2325.8" cy="959.7" r="1.15"/><circle cx="2321.7" cy="956.4" r="1.15"/><circle cx="2322.6" cy="958" r="1.15"/><circle cx="2329.5" cy="954.8" r="1.15"/><circle cx="2337.3" cy="952.9" r="1.15"/><circle cx="2326.5" cy="959.7" r="1.15"/><circle cx="2330.5" cy="954.1" r="1.15"/><circle cx="2323.2" cy="964.8" r="1.15"/><circle cx="2321.2" cy="965.7" r="1.15"/><circle cx="2317.9" cy="968.8" r="1.15"/><circle cx="2317.1" cy="968.5" r="1.15"/><circle cx="2324.8" cy="963.4" r="1.15"/><circle cx="2318.4" cy="969.6" r="1.15"/><circle cx="2323.5" cy="961" r="1.15"/><circle cx="2321.6" cy="967" r="1.15"/><circle cx="2320.2" cy="966.1" r="1.15"/><circle cx="2317.7" cy="969.9" r="1.15"/><circle cx="2321.3" cy="968.4" r="1.15"/><circle cx="2323.3" cy="964.3" r="1.15"/><circle cx="2321.1" cy="967.8" r="1.15"/><circle cx="2325.9" cy="965.6" r="1.15"/><circle cx="2328" cy="964.9" r="1.15"/><circle cx="2327.3" cy="970.5" r="1.15"/><circle cx="2326.5" cy="963.9" r="1.15"/><circle cx="2311.6" cy="972.8" r="1.15"/><circle cx="2315.2" cy="972.1" r="1.15"/><circle cx="2306.7" cy="975.8" r="1.15"/><circle cx="2314.4" cy="972.1" r="1.15"/><circle cx="2317.4" cy="974.6" r="1.15"/><circle cx="2311.7" cy="975.5" r="1.15"/><circle cx="2308.1" cy="975" r="1.15"/><circle cx="2313.7" cy="972.5" r="1.15"/><circle cx="2311.9" cy="972" r="1.15"/><circle cx="2313.8" cy="975.4" r="1.15"/><circle cx="2308.7" cy="974.8" r="1.15"/><circle cx="2311.7" cy="982.3" r="1.15"/><circle cx="2316.9" cy="980.4" r="1.15"/><circle cx="2308.9" cy="977" r="1.15"/><circle cx="2315.2" cy="978" r="1.15"/><circle cx="2315.3" cy="972.3" r="1.15"/><circle cx="2314.3" cy="977.2" r="1.15"/><circle cx="2308.7" cy="977.5" r="1.15"/><circle cx="2304.4" cy="976.7" r="1.15"/><circle cx="2296.7" cy="972" r="1.15"/><circle cx="2296" cy="973.1" r="1.15"/><circle cx="2296.6" cy="971.7" r="1.15"/><circle cx="2303.1" cy="974.7" r="1.15"/><circle cx="2304.3" cy="977.3" r="1.15"/><circle cx="2299.1" cy="976.6" r="1.15"/><circle cx="2298.3" cy="972.6" r="1.15"/><circle cx="2296.5" cy="970.9" r="1.15"/><circle cx="2302.4" cy="974.4" r="1.15"/><circle cx="2295.8" cy="972.6" r="1.15"/><circle cx="2297.4" cy="973.3" r="1.15"/><circle cx="2293" cy="977.9" r="1.15"/><circle cx="2299.2" cy="974.6" r="1.15"/><circle cx="2299.7" cy="983.1" r="1.15"/><circle cx="2294.7" cy="976.1" r="1.15"/><circle cx="2296.3" cy="973.3" r="1.15"/><circle cx="2300.6" cy="975.5" r="1.15"/><circle cx="2292.7" cy="980.4" r="1.15"/><circle cx="2299.9" cy="977.5" r="1.15"/><circle cx="2288.3" cy="967.4" r="1.15"/><circle cx="2283" cy="964.4" r="1.15"/><circle cx="2285.7" cy="965.2" r="1.15"/><circle cx="2292.5" cy="971.2" r="1.15"/><circle cx="2283.4" cy="965.4" r="1.15"/><circle cx="2293.8" cy="969.4" r="1.15"/><circle cx="2289.9" cy="967.6" r="1.15"/><circle cx="2290.4" cy="969.2" r="1.15"/><circle cx="2290.5" cy="969.5" r="1.15"/><circle cx="2291.2" cy="968.2" r="1.15"/><circle cx="2293.4" cy="971.2" r="1.15"/><circle cx="2281.4" cy="965" r="1.15"/><circle cx="2283.2" cy="966.8" r="1.15"/><circle cx="2291.6" cy="970.2" r="1.15"/><circle cx="2291.7" cy="968.4" r="1.15"/><circle cx="2283.2" cy="968.3" r="1.15"/><circle cx="2288.8" cy="971.2" r="1.15"/><circle cx="2286.9" cy="972.6" r="1.15"/><circle cx="2287" cy="971.8" r="1.15"/><circle cx="2290.6" cy="976.3" r="1.15"/><circle cx="2291.8" cy="973.1" r="1.15"/><circle cx="2287.9" cy="968.4" r="1.15"/><circle cx="2288.7" cy="968.3" r="1.15"/><circle cx="2283.3" cy="970.1" r="1.15"/><circle cx="2288.2" cy="971.1" r="1.15"/><circle cx="2287" cy="974.3" r="1.15"/><circle cx="2292.5" cy="972.9" r="1.15"/><circle cx="2269.5" cy="961" r="1.15"/><circle cx="2268.1" cy="956.8" r="1.15"/><circle cx="2270.3" cy="957.8" r="1.15"/><circle cx="2269.1" cy="958.9" r="1.15"/><circle cx="2272" cy="962.8" r="1.15"/><circle cx="2278.7" cy="962" r="1.15"/><circle cx="2274.6" cy="960.5" r="1.15"/><circle cx="2269.7" cy="957.9" r="1.15"/><circle cx="2276.9" cy="962" r="1.15"/><circle cx="2269.8" cy="958.4" r="1.15"/><circle cx="2275.9" cy="961.4" r="1.15"/><circle cx="2270" cy="959.3" r="1.15"/><circle cx="2277.9" cy="961" r="1.15"/><circle cx="2272.8" cy="960.4" r="1.15"/><circle cx="2267.6" cy="972.7" r="1.15"/><circle cx="2274.4" cy="969.3" r="1.15"/><circle cx="2272.9" cy="960.6" r="1.15"/><circle cx="2268.5" cy="963.9" r="1.15"/><circle cx="2268.7" cy="969.7" r="1.15"/><circle cx="2276.4" cy="963.2" r="1.15"/><circle cx="2275.6" cy="962.1" r="1.15"/><circle cx="2260.5" cy="956.3" r="1.15"/><circle cx="2256.9" cy="953.7" r="1.15"/><circle cx="2265.4" cy="955.3" r="1.15"/><circle cx="2258.6" cy="955.7" r="1.15"/><circle cx="2264" cy="957.4" r="1.15"/><circle cx="2264.4" cy="954.8" r="1.15"/><circle cx="2262.3" cy="953.5" r="1.15"/><circle cx="2258.7" cy="956.3" r="1.15"/><circle cx="2264.3" cy="956.5" r="1.15"/><circle cx="2264.3" cy="953.9" r="1.15"/><circle cx="2263.7" cy="954.4" r="1.15"/><circle cx="2258.3" cy="957" r="1.15"/><circle cx="2265.5" cy="958.7" r="1.15"/><circle cx="2260.4" cy="968.9" r="1.15"/><circle cx="2253.1" cy="961.2" r="1.15"/><circle cx="2260.2" cy="956.5" r="1.15"/><circle cx="2262.5" cy="960.4" r="1.15"/><circle cx="2259.2" cy="958.1" r="1.15"/><circle cx="2258.4" cy="959.2" r="1.15"/><circle cx="2260.1" cy="960.6" r="1.15"/><circle cx="2255.7" cy="952.8" r="1.15"/><circle cx="2264.1" cy="963.6" r="1.15"/><circle cx="2248.1" cy="943.5" r="1.15"/><circle cx="2256.4" cy="953.4" r="1.15"/><circle cx="2244.8" cy="942.9" r="1.15"/><circle cx="2256.6" cy="948.8" r="1.15"/><circle cx="2250" cy="947.5" r="1.15"/><circle cx="2247.7" cy="946.6" r="1.15"/><circle cx="2252.1" cy="949.7" r="1.15"/><circle cx="2251.3" cy="949" r="1.15"/><circle cx="2251.3" cy="949.4" r="1.15"/><circle cx="2244" cy="943.2" r="1.15"/><circle cx="2240" cy="940.4" r="1.15"/><circle cx="2249.2" cy="948.6" r="1.15"/><circle cx="2250.3" cy="946.4" r="1.15"/><circle cx="2254" cy="949.7" r="1.15"/><circle cx="2243.9" cy="941.1" r="1.15"/><circle cx="2251.8" cy="949.5" r="1.15"/><circle cx="2239.6" cy="951.7" r="1.15"/><circle cx="2248" cy="950.5" r="1.15"/><circle cx="2251.4" cy="950.6" r="1.15"/><circle cx="2249.9" cy="948.7" r="1.15"/><circle cx="2246.1" cy="946.1" r="1.15"/><circle cx="2239.8" cy="945.1" r="1.15"/><circle cx="2243.4" cy="945.3" r="1.15"/><circle cx="2251.1" cy="952.3" r="1.15"/><circle cx="2235.3" cy="949" r="1.15"/><circle cx="2241" cy="947.3" r="1.15"/><circle cx="2251.4" cy="954.7" r="1.15"/><circle cx="2240.8" cy="940.7" r="1.15"/><circle cx="2232.2" cy="932.2" r="1.15"/><circle cx="2241.4" cy="940.1" r="1.15"/><circle cx="2232.9" cy="936.1" r="1.15"/><circle cx="2235.3" cy="935.5" r="1.15"/><circle cx="2233.7" cy="930.5" r="1.15"/><circle cx="2237.9" cy="939.2" r="1.15"/><circle cx="2235.5" cy="940.3" r="1.15"/><circle cx="2234.3" cy="936.7" r="1.15"/><circle cx="2234.9" cy="934.7" r="1.15"/><circle cx="2233.1" cy="938.7" r="1.15"/><circle cx="2239.6" cy="937.1" r="1.15"/><circle cx="2236.9" cy="936.7" r="1.15"/><circle cx="2231.8" cy="932.3" r="1.15"/><circle cx="2226.5" cy="937.4" r="1.15"/><circle cx="2228.8" cy="935.3" r="1.15"/><circle cx="2229.8" cy="936.4" r="1.15"/><circle cx="2228.5" cy="935.1" r="1.15"/><circle cx="2234.7" cy="940.6" r="1.15"/><circle cx="2230" cy="940" r="1.15"/><circle cx="2232.5" cy="947.8" r="1.15"/><circle cx="2230.8" cy="935.1" r="1.15"/><circle cx="2230.4" cy="940.7" r="1.15"/><circle cx="2220.9" cy="919.9" r="1.15"/><circle cx="2221.6" cy="924.1" r="1.15"/><circle cx="2225.5" cy="928.9" r="1.15"/><circle cx="2226.8" cy="926.9" r="1.15"/><circle cx="2219.8" cy="920.1" r="1.15"/><circle cx="2218.8" cy="918.4" r="1.15"/><circle cx="2219.8" cy="919.7" r="1.15"/><circle cx="2226.9" cy="929.1" r="1.15"/><circle cx="2224.3" cy="923.9" r="1.15"/><circle cx="2224.1" cy="930.5" r="1.15"/><circle cx="2222.5" cy="925.2" r="1.15"/><circle cx="2222.3" cy="925.4" r="1.15"/><circle cx="2223.6" cy="923.1" r="1.15"/><circle cx="2219.7" cy="922.4" r="1.15"/><circle cx="2220.2" cy="919.4" r="1.15"/><circle cx="2221.8" cy="922.3" r="1.15"/><circle cx="2217.7" cy="925.9" r="1.15"/><circle cx="2227.8" cy="931.9" r="1.15"/><circle cx="2228.1" cy="932.7" r="1.15"/><circle cx="2217.5" cy="932.5" r="1.15"/><circle cx="2218.4" cy="928.7" r="1.15"/><circle cx="2227.3" cy="931.1" r="1.15"/><circle cx="2220.2" cy="930" r="1.15"/><circle cx="2223.8" cy="929" r="1.15"/><circle cx="2222.6" cy="927.1" r="1.15"/><circle cx="2219.7" cy="926.1" r="1.15"/><circle cx="2215.3" cy="912.5" r="1.15"/><circle cx="2209.7" cy="908.1" r="1.15"/><circle cx="2208.1" cy="910" r="1.15"/><circle cx="2216.6" cy="915.8" r="1.15"/><circle cx="2215" cy="914.4" r="1.15"/><circle cx="2216" cy="914.1" r="1.15"/><circle cx="2209.7" cy="910.3" r="1.15"/><circle cx="2211.3" cy="910.1" r="1.15"/><circle cx="2216.3" cy="916.5" r="1.15"/><circle cx="2214.7" cy="916" r="1.15"/><circle cx="2211" cy="912.8" r="1.15"/><circle cx="2214.7" cy="913.7" r="1.15"/><circle cx="2211.7" cy="911.2" r="1.15"/><circle cx="2208.7" cy="912" r="1.15"/><circle cx="2213.4" cy="922.4" r="1.15"/><circle cx="2214.8" cy="920.3" r="1.15"/><circle cx="2215.3" cy="918.2" r="1.15"/><circle cx="2210.2" cy="910.1" r="1.15"/><circle cx="2217.7" cy="917.8" r="1.15"/><circle cx="2213.4" cy="917.5" r="1.15"/><circle cx="2208.8" cy="922.5" r="1.15"/><circle cx="2206.2" cy="904.2" r="1.15"/><circle cx="2205.6" cy="904" r="1.15"/><circle cx="2205.1" cy="905.5" r="1.15"/><circle cx="2210" cy="907.5" r="1.15"/><circle cx="2208.5" cy="906.4" r="1.15"/><circle cx="2205.3" cy="902.8" r="1.15"/><circle cx="2206" cy="903.5" r="1.15"/><circle cx="2207.5" cy="906.2" r="1.15"/><circle cx="2206.9" cy="906.7" r="1.15"/><circle cx="2205.8" cy="911.8" r="1.15"/><circle cx="2202.5" cy="910.7" r="1.15"/><circle cx="2207" cy="906.5" r="1.15"/><circle cx="2201.2" cy="906.1" r="1.15"/><circle cx="2205.9" cy="905.8" r="1.15"/><circle cx="2198.9" cy="910.6" r="1.15"/><circle cx="2203.8" cy="900.1" r="1.15"/><circle cx="2205.7" cy="897" r="1.15"/><circle cx="2200.6" cy="895.6" r="1.15"/><circle cx="2204.5" cy="890.6" r="1.15"/><circle cx="2203.4" cy="897" r="1.15"/><circle cx="2204.1" cy="890.6" r="1.15"/><circle cx="2203.5" cy="890.1" r="1.15"/><circle cx="2200.2" cy="897.5" r="1.15"/><circle cx="2203.5" cy="896.7" r="1.15"/><circle cx="2204.7" cy="894.2" r="1.15"/><circle cx="2200.6" cy="898.5" r="1.15"/><circle cx="2201.1" cy="891.9" r="1.15"/><circle cx="2203.2" cy="892.3" r="1.15"/><circle cx="2200.1" cy="899.9" r="1.15"/><circle cx="2201.8" cy="897" r="1.15"/><circle cx="2193.6" cy="893.4" r="1.15"/><circle cx="2206.5" cy="886.9" r="1.15"/><circle cx="2204.9" cy="885.4" r="1.15"/><circle cx="2204.8" cy="889" r="1.15"/><circle cx="2205.8" cy="879.9" r="1.15"/><circle cx="2206.3" cy="885.3" r="1.15"/><circle cx="2206.7" cy="880.3" r="1.15"/><circle cx="2205.9" cy="884.5" r="1.15"/><circle cx="2205.6" cy="888.5" r="1.15"/><circle cx="2205.2" cy="880.6" r="1.15"/><circle cx="2204.6" cy="890.4" r="1.15"/><circle cx="2203.1" cy="885.7" r="1.15"/><circle cx="2196.4" cy="879.5" r="1.15"/><circle cx="2204" cy="887.1" r="1.15"/><circle cx="2202.1" cy="887.8" r="1.15"/><circle cx="2199.9" cy="885.4" r="1.15"/><circle cx="2201.2" cy="884.5" r="1.15"/><circle cx="2202.5" cy="887.6" r="1.15"/><circle cx="2204.7" cy="869.2" r="1.15"/><circle cx="2205.1" cy="870.6" r="1.15"/><circle cx="2207.1" cy="876.9" r="1.15"/><circle cx="2207.5" cy="875" r="1.15"/><circle cx="2205.2" cy="871.3" r="1.15"/><circle cx="2207.7" cy="868.5" r="1.15"/><circle cx="2205.7" cy="879.1" r="1.15"/><circle cx="2206.1" cy="876.6" r="1.15"/><circle cx="2205" cy="869.9" r="1.15"/><circle cx="2203.8" cy="878.1" r="1.15"/><circle cx="2208.3" cy="880.8" r="1.15"/><circle cx="2206" cy="876.4" r="1.15"/><circle cx="2204.1" cy="874.9" r="1.15"/><circle cx="2197.9" cy="875" r="1.15"/><circle cx="2201.8" cy="870.6" r="1.15"/><circle cx="2203.8" cy="880.3" r="1.15"/><circle cx="2198.2" cy="872" r="1.15"/><circle cx="2206.4" cy="879.3" r="1.15"/><circle cx="2201.9" cy="870.6" r="1.15"/><circle cx="2202.2" cy="879.2" r="1.15"/><circle cx="2205.9" cy="864.9" r="1.15"/><circle cx="2207" cy="857.3" r="1.15"/><circle cx="2209.7" cy="856.4" r="1.15"/><circle cx="2208.1" cy="857.9" r="1.15"/><circle cx="2204.9" cy="864.3" r="1.15"/><circle cx="2209.2" cy="858.4" r="1.15"/><circle cx="2207.6" cy="860.8" r="1.15"/><circle cx="2208.4" cy="863" r="1.15"/><circle cx="2207.7" cy="859" r="1.15"/><circle cx="2205.3" cy="863.3" r="1.15"/><circle cx="2207.6" cy="856.6" r="1.15"/><circle cx="2206.9" cy="859.2" r="1.15"/><circle cx="2206.2" cy="855.4" r="1.15"/><circle cx="2202.3" cy="865.9" r="1.15"/><circle cx="2206" cy="856.7" r="1.15"/><circle cx="2203.8" cy="862.3" r="1.15"/><circle cx="2204.1" cy="865.8" r="1.15"/><circle cx="2200.6" cy="859.4" r="1.15"/><circle cx="2206.7" cy="855.6" r="1.15"/><circle cx="2207.4" cy="860.1" r="1.15"/><circle cx="2207.5" cy="852.7" r="1.15"/><circle cx="2207.6" cy="850.7" r="1.15"/><circle cx="2207.9" cy="853.7" r="1.15"/><circle cx="2209.7" cy="853.2" r="1.15"/><circle cx="2206.7" cy="850.4" r="1.15"/><circle cx="2209" cy="849.5" r="1.15"/><circle cx="2207.7" cy="851.9" r="1.15"/><circle cx="2208" cy="849.4" r="1.15"/><circle cx="2209.8" cy="846.4" r="1.15"/><circle cx="2199.6" cy="854" r="1.15"/><circle cx="2204" cy="852" r="1.15"/><circle cx="2206.8" cy="852.5" r="1.15"/><circle cx="2201.6" cy="847.7" r="1.15"/><circle cx="2203.7" cy="852.8" r="1.15"/><circle cx="2207.7" cy="847" r="1.15"/><circle cx="2013.6" cy="844.3" r="1.15"/><circle cx="2013.6" cy="850.7" r="1.15"/><circle cx="2013.6" cy="862.4" r="1.15"/><circle cx="2013.6" cy="876.1" r="1.15"/><circle cx="2013.6" cy="957.8" r="1.15"/><circle cx="2013.6" cy="1011.2" r="1.15"/><circle cx="2159.1" cy="845.3" r="1.15"/><circle cx="2174.5" cy="889.2" r="1.15"/><circle cx="2170.7" cy="897.9" r="1.15"/><circle cx="2165.3" cy="912" r="1.15"/><circle cx="2178.2" cy="922.2" r="1.15"/><circle cx="2181.9" cy="926" r="1.15"/><circle cx="2130.4" cy="976.3" r="1.15"/><circle cx="2118.4" cy="991.4" r="1.15"/><circle cx="2199.4" cy="979.2" r="1.15"/><circle cx="2175.3" cy="841.2" r="1.15"/><circle cx="2177.4" cy="842.4" r="1.15"/><circle cx="2182.4" cy="841.6" r="1.15"/><circle cx="2180.7" cy="850.7" r="1.15"/><circle cx="2183.6" cy="846.6" r="1.15"/><circle cx="2191.5" cy="841.2" r="1.15"/><circle cx="2188.2" cy="859.9" r="1.15"/><circle cx="2192.3" cy="854.7" r="1.15"/><circle cx="2194.8" cy="849.5" r="1.15"/><circle cx="2192.8" cy="869.2" r="1.15"/><circle cx="2192.3" cy="876.9" r="1.15"/><circle cx="2187.3" cy="905.6" r="1.15"/><circle cx="2190.7" cy="911.8" r="1.15"/><circle cx="2193.8" cy="917" r="1.15"/><circle cx="2194.4" cy="902.5" r="1.15"/><circle cx="2199" cy="847.4" r="1.15"/><circle cx="2201.1" cy="854.1" r="1.15"/><circle cx="2200.6" cy="859.9" r="1.15"/><circle cx="2202.1" cy="872.3" r="1.15"/><circle cx="2200.6" cy="884.8" r="1.15"/><circle cx="2199" cy="895.2" r="1.15"/><circle cx="2202.7" cy="905.6" r="1.15"/><circle cx="2196.9" cy="907.7" r="1.15"/><circle cx="2200.2" cy="934.7" r="1.15"/><circle cx="2204.4" cy="932.6" r="1.15"/><circle cx="2210.6" cy="934.3" r="1.15"/><circle cx="2201.9" cy="944.7" r="1.15"/><circle cx="2212.7" cy="947.6" r="1.15"/><circle cx="2208.5" cy="954.6" r="1.15"/><circle cx="2209.8" cy="960.5" r="1.15"/><circle cx="2219.8" cy="963.4" r="1.15"/><circle cx="2224.3" cy="966.3" r="1.15"/><circle cx="2229.3" cy="964.6" r="1.15"/><circle cx="2218.5" cy="971.3" r="1.15"/><circle cx="2332" cy="911.8" r="1.15"/><circle cx="2336.6" cy="917.2" r="1.15"/><circle cx="2336.6" cy="917.6" r="1.15"/><circle cx="2324.1" cy="921.8" r="1.15"/><circle cx="2325.3" cy="930.5" r="1.15"/><circle cx="2336.1" cy="936.4" r="1.15"/><circle cx="2338.6" cy="943" r="1.15"/><circle cx="2332" cy="946.1" r="1.15"/><circle cx="2329.9" cy="953.4" r="1.15"/><circle cx="2335.3" cy="955.1" r="1.15"/><circle cx="2333.2" cy="940.1" r="1.15"/><circle cx="2331.2" cy="935.9" r="1.15"/><circle cx="2329.5" cy="939.3" r="1.15"/><circle cx="2327" cy="964.2" r="1.15"/><circle cx="2325.3" cy="983.7" r="1.15"/><circle cx="2319.5" cy="990.4" r="1.15"/><circle cx="2320.3" cy="996.2" r="1.15"/><circle cx="2324.1" cy="996.6" r="1.15"/><circle cx="2311.2" cy="985" r="1.15"/><circle cx="2306.6" cy="996.2" r="1.15"/><circle cx="2302.1" cy="999.9" r="1.15"/><circle cx="2308.3" cy="1008.7" r="1.15"/><circle cx="2301.6" cy="1018.2" r="1.15"/><circle cx="2236.4" cy="980.8" r="1.15"/><circle cx="2242.2" cy="982.5" r="1.15"/><circle cx="2232.7" cy="985" r="1.15"/><circle cx="2259.3" cy="983.7" r="1.15"/><circle cx="2270.5" cy="981.7" r="1.15"/><circle cx="2276.7" cy="984.1" r="1.15"/><circle cx="2282.5" cy="986.6" r="1.15"/><circle cx="2297.1" cy="984.6" r="1.15"/><circle cx="2270.5" cy="990" r="1.15"/><circle cx="2275.9" cy="990.8" r="1.15"/><circle cx="2284.6" cy="992" r="1.15"/><circle cx="2243.9" cy="993.7" r="1.15"/><circle cx="2259.7" cy="993.7" r="1.15"/><circle cx="2262.6" cy="995.8" r="1.15"/><circle cx="2265.9" cy="997.9" r="1.15"/><circle cx="2282.1" cy="995.4" r="1.15"/><circle cx="2287.5" cy="995.8" r="1.15"/><circle cx="2218.5" cy="997.4" r="1.15"/><circle cx="2222.3" cy="1003.3" r="1.15"/><circle cx="2231" cy="1003.3" r="1.15"/><circle cx="2252.2" cy="1001.2" r="1.15"/><circle cx="2251.4" cy="1007.8" r="1.15"/><circle cx="2275" cy="999.1" r="1.15"/><circle cx="2281.3" cy="1000.4" r="1.15"/><circle cx="2286.3" cy="1001.2" r="1.15"/><circle cx="2288.8" cy="1005.8" r="1.15"/><circle cx="2287.5" cy="1011.6" r="1.15"/><circle cx="2256.8" cy="1015.7" r="1.15"/><circle cx="2260.1" cy="1016.6" r="1.15"/><circle cx="2275.5" cy="1015.3" r="1.15"/><circle cx="2275" cy="1015.7" r="1.15"/><circle cx="2280.4" cy="1019.9" r="1.15"/><circle cx="2234.7" cy="1018.6" r="1.15"/><circle cx="2249.3" cy="1024.5" r="1.15"/><circle cx="2256.8" cy="1024" r="1.15"/><circle cx="2263.4" cy="1022.4" r="1.15"/><circle cx="2268" cy="1022.4" r="1.15"/><circle cx="2270.9" cy="1027" r="1.15"/><circle cx="2270.5" cy="1031.9" r="1.15"/><circle cx="2241" cy="1031.5" r="1.15"/><circle cx="2224.8" cy="1033.6" r="1.15"/><circle cx="2241.8" cy="942.9" r="1.15"/><circle cx="2282.1" cy="964.9" r="1.15"/><circle cx="2284.5" cy="965.8" r="1.15"/><circle cx="2307.9" cy="974.3" r="1.15"/><circle cx="2244.2" cy="941.6" r="1.15"/><circle cx="2267.4" cy="969.5" r="1.15"/><circle cx="2307.7" cy="980.5" r="1.15"/><circle cx="2232.2" cy="933.7" r="1.15"/><circle cx="2285.5" cy="969.5" r="1.15"/><circle cx="2297.3" cy="977.1" r="1.15"/><circle cx="2289.6" cy="975.4" r="1.15"/><circle cx="2280.7" cy="965.8" r="1.15"/><circle cx="2248.8" cy="952" r="1.15"/><circle cx="2267.7" cy="956.5" r="1.15"/><circle cx="2294.8" cy="976.8" r="1.15"/><circle cx="2317.1" cy="974.4" r="1.15"/><circle cx="2259.1" cy="951" r="1.15"/><circle cx="2318.7" cy="973.3" r="1.15"/><circle cx="2312.4" cy="973.7" r="1.15"/><circle cx="2239.5" cy="938.7" r="1.15"/><circle cx="2322" cy="972.8" r="1.15"/><circle cx="2248.8" cy="945.5" r="1.15"/><circle cx="2271.5" cy="960.3" r="1.15"/><circle cx="2280.1" cy="965.2" r="1.15"/><circle cx="2280" cy="968" r="1.15"/><circle cx="2317.9" cy="972.9" r="1.15"/><circle cx="2309.9" cy="979.7" r="1.15"/><circle cx="2233.6" cy="934" r="1.15"/><circle cx="2310.4" cy="982.4" r="1.15"/><circle cx="2278.3" cy="963.5" r="1.15"/><circle cx="2294.2" cy="973.3" r="1.15"/><circle cx="2278.8" cy="970" r="1.15"/><circle cx="2247" cy="950.2" r="1.15"/><circle cx="2324.6" cy="969.1" r="1.15"/><circle cx="2225.4" cy="929.9" r="1.15"/><circle cx="2232.2" cy="937.2" r="1.15"/><circle cx="2248" cy="943.6" r="1.15"/><circle cx="2220.5" cy="934.7" r="1.15"/><circle cx="2283.3" cy="971.4" r="1.15"/><circle cx="2252.1" cy="947.1" r="1.15"/><circle cx="2312.6" cy="977" r="1.15"/><circle cx="2325.6" cy="965.8" r="1.15"/><circle cx="2249.7" cy="949.1" r="1.15"/><circle cx="2219.1" cy="927.4" r="1.15"/><circle cx="2237.4" cy="941.2" r="1.15"/><circle cx="2232.8" cy="936.5" r="1.15"/><circle cx="2220.3" cy="928" r="1.15"/><circle cx="2321.2" cy="970.2" r="1.15"/><circle cx="2314.4" cy="974.4" r="1.15"/><circle cx="2272.9" cy="961.5" r="1.15"/><circle cx="2286.5" cy="971.2" r="1.15"/><circle cx="2283.9" cy="968.1" r="1.15"/><circle cx="2319.2" cy="973.2" r="1.15"/><circle cx="2294.9" cy="971.8" r="1.15"/><circle cx="2241.8" cy="942.6" r="1.15"/><circle cx="2273" cy="970" r="1.15"/><circle cx="2276" cy="964.6" r="1.15"/><circle cx="2279.5" cy="962.4" r="1.15"/><circle cx="2217.8" cy="928.6" r="1.15"/><circle cx="2222.2" cy="930.8" r="1.15"/><circle cx="2284.7" cy="972" r="1.15"/><circle cx="2254.4" cy="948" r="1.15"/><circle cx="2293.5" cy="970.8" r="1.15"/><circle cx="2222.3" cy="927.5" r="1.15"/><circle cx="2290.1" cy="972" r="1.15"/><circle cx="2265.9" cy="954.4" r="1.15"/><circle cx="2280.9" cy="964.8" r="1.15"/><circle cx="2250" cy="947.7" r="1.15"/><circle cx="2256.3" cy="950.8" r="1.15"/><circle cx="2257.2" cy="950.4" r="1.15"/><circle cx="2300.7" cy="981" r="1.15"/><circle cx="2296.6" cy="973.6" r="1.15"/><circle cx="2249.8" cy="945" r="1.15"/><circle cx="2241.9" cy="946.9" r="1.15"/><circle cx="2236.3" cy="941.7" r="1.15"/><circle cx="2226.8" cy="932.2" r="1.15"/><circle cx="2251.1" cy="948.8" r="1.15"/><circle cx="2263.9" cy="959.9" r="1.15"/><circle cx="2309.8" cy="975" r="1.15"/><circle cx="2287.2" cy="970.5" r="1.15"/><circle cx="2313.1" cy="974.5" r="1.15"/><circle cx="2228.9" cy="931.7" r="1.15"/><circle cx="2273.9" cy="961.6" r="1.15"/><circle cx="2308" cy="981.6" r="1.15"/><circle cx="2235.8" cy="936.4" r="1.15"/><circle cx="2286.3" cy="974.4" r="1.15"/><circle cx="2304.4" cy="977.1" r="1.15"/><circle cx="2247.8" cy="944.4" r="1.15"/><circle cx="2303" cy="976.9" r="1.15"/><circle cx="2261.5" cy="955.1" r="1.15"/><circle cx="2261.8" cy="959.8" r="1.15"/><circle cx="2232.8" cy="938.6" r="1.15"/><circle cx="2216.1" cy="931.6" r="1.15"/><circle cx="2324.3" cy="969" r="1.15"/><circle cx="2263.5" cy="962" r="1.15"/><circle cx="2240.1" cy="940.8" r="1.15"/><circle cx="2297.7" cy="976.8" r="1.15"/><circle cx="2272.8" cy="963.6" r="1.15"/><circle cx="2247.4" cy="943.9" r="1.15"/><circle cx="2223.1" cy="929.8" r="1.15"/><circle cx="2280.4" cy="964.5" r="1.15"/><circle cx="2220.6" cy="933.6" r="1.15"/><circle cx="2315.1" cy="973.9" r="1.15"/><circle cx="2314.4" cy="980.5" r="1.15"/><circle cx="2314.7" cy="971.2" r="1.15"/><circle cx="2297.7" cy="973.7" r="1.15"/><circle cx="2234.5" cy="936.2" r="1.15"/><circle cx="2273.4" cy="964.7" r="1.15"/><circle cx="2261.2" cy="956.5" r="1.15"/><circle cx="2253.2" cy="948.1" r="1.15"/><circle cx="2243.4" cy="943" r="1.15"/><circle cx="2301.8" cy="979.8" r="1.15"/><circle cx="2254.4" cy="948.3" r="1.15"/><circle cx="2305.6" cy="980.5" r="1.15"/><circle cx="2234.5" cy="936.8" r="1.15"/><circle cx="2304.4" cy="985.7" r="1.15"/><circle cx="2306.3" cy="981.2" r="1.15"/><circle cx="2310.6" cy="972.9" r="1.15"/><circle cx="2221.1" cy="926.3" r="1.15"/><circle cx="2273.7" cy="962" r="1.15"/><circle cx="2262.2" cy="959.1" r="1.15"/><circle cx="2215.8" cy="923.9" r="1.15"/><circle cx="2221.7" cy="927.8" r="1.15"/><circle cx="2223.1" cy="928.8" r="1.15"/><circle cx="2323" cy="967.6" r="1.15"/><circle cx="2270.9" cy="958.3" r="1.15"/><circle cx="2250.4" cy="945.7" r="1.15"/><circle cx="2286.9" cy="970.5" r="1.15"/><circle cx="2280.2" cy="964.4" r="1.15"/><circle cx="2251.8" cy="947.2" r="1.15"/><circle cx="2229.2" cy="937.7" r="1.15"/><circle cx="2257.5" cy="950.9" r="1.15"/><circle cx="2224.4" cy="929.8" r="1.15"/><circle cx="2282.2" cy="967.7" r="1.15"/><circle cx="2301.8" cy="981.9" r="1.15"/><circle cx="2284.2" cy="970.6" r="1.15"/><circle cx="2263.1" cy="955.6" r="1.15"/><circle cx="2293" cy="974.3" r="1.15"/><circle cx="2261.9" cy="952.9" r="1.15"/><circle cx="2242.6" cy="943.9" r="1.15"/><circle cx="2274.6" cy="959.6" r="1.15"/><circle cx="2262.4" cy="953.1" r="1.15"/><circle cx="2262.5" cy="959.3" r="1.15"/><circle cx="2256.8" cy="955.3" r="1.15"/><circle cx="2314.5" cy="971.6" r="1.15"/><circle cx="2266.7" cy="957.6" r="1.15"/><circle cx="2229.2" cy="933.4" r="1.15"/><circle cx="2313.3" cy="977.4" r="1.15"/><circle cx="2302.9" cy="980.1" r="1.15"/><circle cx="2277.7" cy="967.4" r="1.15"/><circle cx="2312.9" cy="947.4" r="1.15"/><circle cx="2311.3" cy="925.2" r="1.15"/><circle cx="2324.1" cy="920.3" r="1.15"/><circle cx="2312.7" cy="923" r="1.15"/><circle cx="2325.8" cy="927" r="1.15"/><circle cx="2311.6" cy="960" r="1.15"/><circle cx="2313.2" cy="960.2" r="1.15"/><circle cx="2322.4" cy="959.8" r="1.15"/><circle cx="2327" cy="946.9" r="1.15"/><circle cx="2324.5" cy="919.9" r="1.15"/><circle cx="2324" cy="943.6" r="1.15"/><circle cx="2323.1" cy="923.4" r="1.15"/><circle cx="2323.7" cy="964.7" r="1.15"/><circle cx="2312.2" cy="934.2" r="1.15"/><circle cx="2320.6" cy="959.4" r="1.15"/><circle cx="2315.2" cy="927" r="1.15"/><circle cx="2315.4" cy="948.8" r="1.15"/><circle cx="2323.7" cy="937.7" r="1.15"/><circle cx="2317.3" cy="937.8" r="1.15"/><circle cx="2317" cy="938.9" r="1.15"/><circle cx="2312.6" cy="943" r="1.15"/><circle cx="2327.4" cy="938.7" r="1.15"/><circle cx="2323.6" cy="926.1" r="1.15"/><circle cx="2322.7" cy="955.8" r="1.15"/><circle cx="2322.4" cy="943.9" r="1.15"/><circle cx="2319.2" cy="950.1" r="1.15"/><circle cx="2326.1" cy="925.5" r="1.15"/><circle cx="2312.8" cy="955.4" r="1.15"/><circle cx="2326.4" cy="943.9" r="1.15"/><circle cx="2318.6" cy="953.9" r="1.15"/><circle cx="2314.3" cy="931.4" r="1.15"/><circle cx="2314.5" cy="947.3" r="1.15"/><circle cx="2316.4" cy="929.6" r="1.15"/><circle cx="2322.7" cy="965.6" r="1.15"/><circle cx="2316.1" cy="953.2" r="1.15"/><circle cx="2318.1" cy="960.6" r="1.15"/><circle cx="2320.9" cy="931.4" r="1.15"/><circle cx="2314.8" cy="919.2" r="1.15"/><circle cx="2319.2" cy="937.2" r="1.15"/><circle cx="2314.1" cy="936" r="1.15"/><circle cx="2316.6" cy="956.7" r="1.15"/><circle cx="2313.6" cy="967.5" r="1.15"/><circle cx="2319.2" cy="947.9" r="1.15"/><circle cx="2319" cy="959.7" r="1.15"/><circle cx="2324.9" cy="945.8" r="1.15"/><circle cx="2319.2" cy="954" r="1.15"/><circle cx="2325.4" cy="938" r="1.15"/><circle cx="2323.4" cy="966" r="1.15"/><circle cx="2319" cy="929.5" r="1.15"/><circle cx="2315.1" cy="953.9" r="1.15"/><circle cx="2322.4" cy="965.9" r="1.15"/><circle cx="2325.4" cy="930.1" r="1.15"/><circle cx="2314.4" cy="931" r="1.15"/><circle cx="2314.3" cy="953.2" r="1.15"/><circle cx="2325.5" cy="962.9" r="1.15"/><circle cx="2315.4" cy="961.2" r="1.15"/><circle cx="2316.4" cy="939.2" r="1.15"/><circle cx="2323.3" cy="922.3" r="1.15"/><circle cx="2312.7" cy="959.7" r="1.15"/><circle cx="2316.1" cy="935.9" r="1.15"/><circle cx="2314.8" cy="932.9" r="1.15"/><circle cx="2312.3" cy="928" r="1.15"/><circle cx="2326.8" cy="957.8" r="1.15"/><circle cx="2321.8" cy="948.2" r="1.15"/><circle cx="2317.8" cy="945.8" r="1.15"/><circle cx="2325.7" cy="957.3" r="1.15"/><circle cx="2313.8" cy="919.3" r="1.15"/><circle cx="2314.8" cy="920.8" r="1.15"/><circle cx="2315.8" cy="928.5" r="1.15"/><circle cx="2317.1" cy="947.2" r="1.15"/><circle cx="2317.2" cy="938" r="1.15"/><circle cx="2308.5" cy="905.1" r="1.15"/><circle cx="2312.4" cy="936.2" r="1.15"/><circle cx="2320.2" cy="941.9" r="1.15"/><circle cx="2325.2" cy="962.5" r="1.15"/><circle cx="2313" cy="910.7" r="1.15"/><circle cx="2310.3" cy="913.8" r="1.15"/><circle cx="2316.5" cy="945.8" r="1.15"/><circle cx="2323.8" cy="950.6" r="1.15"/><circle cx="2314.2" cy="935" r="1.15"/><circle cx="2306.5" cy="899.6" r="1.15"/><circle cx="2308.2" cy="906.1" r="1.15"/><circle cx="2322.3" cy="950.3" r="1.15"/><circle cx="2313.3" cy="915.2" r="1.15"/><circle cx="2316" cy="932.7" r="1.15"/><circle cx="2318.3" cy="929.7" r="1.15"/><circle cx="2316.5" cy="933.5" r="1.15"/><circle cx="2306.8" cy="898.3" r="1.15"/><circle cx="2323.3" cy="945.4" r="1.15"/><circle cx="2313.3" cy="928.2" r="1.15"/><circle cx="2315.7" cy="944.9" r="1.15"/><circle cx="2325" cy="949.5" r="1.15"/><circle cx="2318.9" cy="947.9" r="1.15"/><circle cx="2320.5" cy="942.4" r="1.15"/><circle cx="2313.3" cy="937.5" r="1.15"/><circle cx="2323.5" cy="962.9" r="1.15"/><circle cx="2311.6" cy="915.4" r="1.15"/><circle cx="2312.1" cy="939.4" r="1.15"/><circle cx="2310.7" cy="920.3" r="1.15"/><circle cx="2314.4" cy="937.6" r="1.15"/><circle cx="2310.8" cy="905.4" r="1.15"/><circle cx="2313.2" cy="912.6" r="1.15"/><circle cx="2322.7" cy="952.6" r="1.15"/><circle cx="2308.7" cy="922.1" r="1.15"/><circle cx="2322.9" cy="954.1" r="1.15"/><circle cx="2325.8" cy="957" r="1.15"/><circle cx="2321.6" cy="948" r="1.15"/><circle cx="2308.7" cy="897.1" r="1.15"/><circle cx="2310.6" cy="918.4" r="1.15"/><circle cx="2311.2" cy="938.4" r="1.15"/><circle cx="2320.1" cy="940.3" r="1.15"/><circle cx="2308" cy="900.3" r="1.15"/><circle cx="2313.8" cy="943" r="1.15"/><circle cx="2312.5" cy="931.5" r="1.15"/><circle cx="2323" cy="958.7" r="1.15"/><circle cx="2322.4" cy="958.4" r="1.15"/><circle cx="2326.2" cy="960.9" r="1.15"/><circle cx="2312.5" cy="937.4" r="1.15"/><circle cx="2318.4" cy="947.7" r="1.15"/><circle cx="2322.3" cy="946.6" r="1.15"/><circle cx="2314.1" cy="935" r="1.15"/><circle cx="2309.2" cy="900.5" r="1.15"/><circle cx="2307.2" cy="910.2" r="1.15"/><circle cx="2314.2" cy="939.4" r="1.15"/><circle cx="2322.2" cy="947.4" r="1.15"/><circle cx="2314.3" cy="920.2" r="1.15"/><circle cx="2316.8" cy="926.1" r="1.15"/><circle cx="2321.4" cy="945.9" r="1.15"/><circle cx="2319.7" cy="935" r="1.15"/><circle cx="2308.9" cy="909.3" r="1.15"/><circle cx="2321.3" cy="951.9" r="1.15"/><circle cx="2315.9" cy="926.3" r="1.15"/><circle cx="2313.3" cy="938.5" r="1.15"/><circle cx="2318.2" cy="943.2" r="1.15"/><circle cx="2324.4" cy="947.4" r="1.15"/><circle cx="2313" cy="911" r="1.15"/><circle cx="2322.5" cy="950.4" r="1.15"/><circle cx="2324" cy="957.5" r="1.15"/><circle cx="2309.4" cy="907.8" r="1.15"/><circle cx="2315.9" cy="944.6" r="1.15"/><circle cx="2312.1" cy="940" r="1.15"/><circle cx="2307.6" cy="896.9" r="1.15"/><circle cx="2321.1" cy="936" r="1.15"/><circle cx="2314.6" cy="929.2" r="1.15"/><circle cx="2319.1" cy="939" r="1.15"/><circle cx="2312.8" cy="917.9" r="1.15"/><circle cx="2321.8" cy="939" r="1.15"/><circle cx="2314.9" cy="930.1" r="1.15"/><circle cx="2317.9" cy="935.2" r="1.15"/><circle cx="2311.9" cy="916.6" r="1.15"/><circle cx="2308.6" cy="903.8" r="1.15"/><circle cx="2309.4" cy="900.9" r="1.15"/><circle cx="2309.9" cy="936.4" r="1.15"/><circle cx="2306.5" cy="907.6" r="1.15"/><circle cx="2316.4" cy="941" r="1.15"/><circle cx="2325" cy="948.9" r="1.15"/><circle cx="2308.1" cy="917.5" r="1.15"/><circle cx="2319.7" cy="940.5" r="1.15"/><circle cx="2322.7" cy="947.6" r="1.15"/><circle cx="2307.8" cy="915.2" r="1.15"/><circle cx="2314.2" cy="943" r="1.15"/><circle cx="2308.9" cy="928.7" r="1.15"/><circle cx="2311.4" cy="916.8" r="1.15"/><circle cx="2313" cy="913.1" r="1.15"/><circle cx="2320.1" cy="948.9" r="1.15"/><circle cx="2308.2" cy="921.5" r="1.15"/><circle cx="2318.5" cy="946.9" r="1.15"/><circle cx="2322.6" cy="956.2" r="1.15"/><circle cx="2325" cy="952.7" r="1.15"/><circle cx="2314.3" cy="941.1" r="1.15"/><circle cx="2311.2" cy="902.2" r="1.15"/><circle cx="2311.2" cy="925.2" r="1.15"/><circle cx="2307" cy="918.1" r="1.15"/><circle cx="2307.4" cy="917.8" r="1.15"/><circle cx="2308.2" cy="917.9" r="1.15"/><circle cx="2317.6" cy="933.1" r="1.15"/><circle cx="2324" cy="954.4" r="1.15"/><circle cx="2310.2" cy="908.5" r="1.15"/><circle cx="2324.2" cy="947" r="1.15"/><circle cx="2311.8" cy="914.9" r="1.15"/><circle cx="2326.7" cy="959.6" r="1.15"/><circle cx="2315" cy="943.2" r="1.15"/><circle cx="2324.7" cy="959.1" r="1.15"/><circle cx="2311.5" cy="903" r="1.15"/><circle cx="2319.1" cy="938.6" r="1.15"/><circle cx="2308.6" cy="914.4" r="1.15"/><circle cx="2308" cy="922.6" r="1.15"/><circle cx="2311.6" cy="911.8" r="1.15"/><circle cx="2312.5" cy="931.8" r="1.15"/><circle cx="2305.5" cy="898.5" r="1.15"/><circle cx="2309" cy="910.2" r="1.15"/><circle cx="2312.2" cy="913.9" r="1.15"/><circle cx="2323.7" cy="940.6" r="1.15"/><circle cx="2318.6" cy="947" r="1.15"/><circle cx="2316.7" cy="947.5" r="1.15"/><circle cx="2319.2" cy="938.5" r="1.15"/><circle cx="2307" cy="914.1" r="1.15"/><circle cx="2316.8" cy="943.4" r="1.15"/><circle cx="2316.2" cy="933.1" r="1.15"/><circle cx="2309.8" cy="924" r="1.15"/><circle cx="2314" cy="942.5" r="1.15"/><circle cx="2313" cy="917.5" r="1.15"/><circle cx="2309.7" cy="906.2" r="1.15"/><circle cx="2321" cy="941.8" r="1.15"/><circle cx="2308.2" cy="921.6" r="1.15"/><circle cx="2312.3" cy="941.6" r="1.15"/><circle cx="2309.1" cy="930.1" r="1.15"/><circle cx="2308.5" cy="901" r="1.15"/><circle cx="2313.2" cy="940.2" r="1.15"/><circle cx="2312.6" cy="929" r="1.15"/><circle cx="2313.6" cy="940.5" r="1.15"/><circle cx="2323.2" cy="948.2" r="1.15"/><circle cx="2324.8" cy="951" r="1.15"/><circle cx="2313.9" cy="939.6" r="1.15"/><circle cx="2322.4" cy="960" r="1.15"/><circle cx="2306.4" cy="912.7" r="1.15"/><circle cx="2322.7" cy="963.5" r="1.15"/><circle cx="2312" cy="909.3" r="1.15"/><circle cx="2318.9" cy="931.3" r="1.15"/><circle cx="2315.8" cy="923" r="1.15"/><circle cx="2309.6" cy="912.8" r="1.15"/><circle cx="2309.1" cy="905" r="1.15"/><circle cx="2318.2" cy="936.2" r="1.15"/><circle cx="2315.6" cy="920.6" r="1.15"/><circle cx="2312.3" cy="919.9" r="1.15"/><circle cx="2315.4" cy="940.3" r="1.15"/><circle cx="2317.1" cy="935.6" r="1.15"/><circle cx="2320.4" cy="949.6" r="1.15"/><circle cx="2310.1" cy="928.1" r="1.15"/><circle cx="2309.3" cy="904.1" r="1.15"/><circle cx="2315.4" cy="939.9" r="1.15"/><circle cx="2319.2" cy="940.6" r="1.15"/><circle cx="2326.2" cy="954.8" r="1.15"/><circle cx="2307.3" cy="918" r="1.15"/><circle cx="2311.2" cy="920.8" r="1.15"/><circle cx="2312.2" cy="932.8" r="1.15"/><circle cx="2316.6" cy="939" r="1.15"/><circle cx="2318.4" cy="934.5" r="1.15"/><circle cx="2316.4" cy="924.4" r="1.15"/><circle cx="2315.2" cy="941.7" r="1.15"/><circle cx="2314.4" cy="943.3" r="1.15"/><circle cx="2323.2" cy="945.3" r="1.15"/><circle cx="2315.7" cy="937.1" r="1.15"/><circle cx="2324.8" cy="951.5" r="1.15"/><circle cx="2322.1" cy="955.3" r="1.15"/><circle cx="2313" cy="942" r="1.15"/><circle cx="2306" cy="907.8" r="1.15"/><circle cx="2313.5" cy="938" r="1.15"/><circle cx="2315.7" cy="937.3" r="1.15"/><circle cx="2322.4" cy="954.5" r="1.15"/><circle cx="2205.4" cy="865.9" r="1.15"/><circle cx="2204.7" cy="903.5" r="1.15"/><circle cx="2205.8" cy="902.9" r="1.15"/><circle cx="2206.2" cy="846.9" r="1.15"/><circle cx="2200.7" cy="856" r="1.15"/><circle cx="2206" cy="883" r="1.15"/><circle cx="2200.7" cy="893.8" r="1.15"/><circle cx="2198.4" cy="896.6" r="1.15"/><circle cx="2205.6" cy="855.7" r="1.15"/><circle cx="2203.4" cy="876.9" r="1.15"/><circle cx="2202" cy="886.1" r="1.15"/><circle cx="2201.5" cy="881.1" r="1.15"/><circle cx="2200.5" cy="881.9" r="1.15"/><circle cx="2203.9" cy="871.5" r="1.15"/><circle cx="2205.7" cy="877.6" r="1.15"/><circle cx="2201.3" cy="871.4" r="1.15"/><circle cx="2201.9" cy="903.3" r="1.15"/><circle cx="2201.9" cy="850" r="1.15"/><circle cx="2208.7" cy="854.8" r="1.15"/><circle cx="2203.9" cy="866.2" r="1.15"/><circle cx="2200.9" cy="866.7" r="1.15"/><circle cx="2199" cy="846.2" r="1.15"/><circle cx="2203.8" cy="894.7" r="1.15"/><circle cx="2205.3" cy="856.7" r="1.15"/><circle cx="2206" cy="847.1" r="1.15"/><circle cx="2202.1" cy="896.8" r="1.15"/><circle cx="2203.6" cy="881.2" r="1.15"/><circle cx="2202.9" cy="890.3" r="1.15"/><circle cx="2205.3" cy="866.4" r="1.15"/><circle cx="2204.8" cy="904.1" r="1.15"/><circle cx="2205.1" cy="865.6" r="1.15"/><circle cx="2198.8" cy="888.1" r="1.15"/><circle cx="2202.4" cy="861" r="1.15"/><circle cx="2201.2" cy="851.4" r="1.15"/><circle cx="2199.4" cy="860.1" r="1.15"/><circle cx="2208.3" cy="855.4" r="1.15"/><circle cx="2200.2" cy="850" r="1.15"/><circle cx="2202.9" cy="857.1" r="1.15"/><circle cx="2201.1" cy="890.8" r="1.15"/><circle cx="2208.1" cy="845.9" r="1.15"/><circle cx="2199.2" cy="875.2" r="1.15"/><circle cx="2201.7" cy="891.8" r="1.15"/><circle cx="2206.3" cy="873.5" r="1.15"/><circle cx="2199.8" cy="858.6" r="1.15"/><circle cx="2200.1" cy="848" r="1.15"/><circle cx="2205.6" cy="853.9" r="1.15"/><circle cx="2204.7" cy="846.5" r="1.15"/><circle cx="2203.1" cy="845.7" r="1.15"/><circle cx="2205.1" cy="906.9" r="1.15"/><circle cx="2208.1" cy="858.7" r="1.15"/><circle cx="2203.8" cy="852.8" r="1.15"/><circle cx="2201.1" cy="899.1" r="1.15"/><circle cx="2207.7" cy="844.4" r="1.15"/><circle cx="2201.6" cy="884.8" r="1.15"/><circle cx="2198.8" cy="895.2" r="1.15"/><circle cx="2201.4" cy="898.1" r="1.15"/><circle cx="2203.5" cy="855.9" r="1.15"/><circle cx="2200.2" cy="854" r="1.15"/><circle cx="2202" cy="899.7" r="1.15"/><circle cx="2205.4" cy="856.3" r="1.15"/><circle cx="2198.6" cy="847" r="1.15"/><circle cx="2201.6" cy="858.9" r="1.15"/><circle cx="2203.5" cy="905.8" r="1.15"/><circle cx="2203.7" cy="892.9" r="1.15"/><circle cx="2207.8" cy="850.1" r="1.15"/><circle cx="2203.4" cy="903.9" r="1.15"/><circle cx="2205" cy="891.2" r="1.15"/><circle cx="2201" cy="905.9" r="1.15"/><circle cx="2205.4" cy="864.4" r="1.15"/><circle cx="2200.3" cy="859.1" r="1.15"/><circle cx="2200.5" cy="845.3" r="1.15"/><circle cx="2200.8" cy="850.4" r="1.15"/><circle cx="2202.5" cy="865.1" r="1.15"/><circle cx="2198.8" cy="874.3" r="1.15"/><circle cx="2202.1" cy="866.5" r="1.15"/><circle cx="2203.9" cy="900" r="1.15"/><circle cx="2203.5" cy="857.7" r="1.15"/><circle cx="2200.7" cy="852.7" r="1.15"/><circle cx="2207.7" cy="851.1" r="1.15"/><circle cx="2203" cy="895.1" r="1.15"/><circle cx="2203.3" cy="848.2" r="1.15"/><circle cx="2201.1" cy="868.2" r="1.15"/><circle cx="2202.7" cy="884.2" r="1.15"/><circle cx="2201.4" cy="862.1" r="1.15"/><circle cx="2198.5" cy="872.8" r="1.15"/><circle cx="2207.1" cy="857.7" r="1.15"/><circle cx="2202.9" cy="884.5" r="1.15"/><circle cx="2205.1" cy="845.1" r="1.15"/><circle cx="2200.6" cy="859.1" r="1.15"/><circle cx="2205.9" cy="903.5" r="1.15"/></g>
<path d="M2042.5 830.4V1043.4M2098.6 830.4V1043.4M2155.3 830.4V1043.4M2211.7 830.4V1043.4M2268.4 830.4V1043.4M2325.1 830.4V1043.4M1997.4 839.7H2354.8M1997.4 868.1H2354.8M1997.4 896.4H2354.8M1997.4 924.8H2354.8M1997.4 953.1H2354.8M1997.4 981.5H2354.8M1997.4 1009.9H2354.8M1997.4 1038.2H2354.8" stroke="#d8d8d8" stroke-width="0.6" fill="none" opacity="0.45"/>
<rect x="1997.4" y="830.4" width="357.4" height="213.0" fill="none" stroke="#333" stroke-width="0.7"/>
<path d="M2042.5 1043.4v1.6M2098.6 1043.4v1.6M2155.3 1043.4v1.6M2211.7 1043.4v1.6M2268.4 1043.4v1.6M2325.1 1043.4v1.6M1997.4 839.7h-1.6M1997.4 868.1h-1.6M1997.4 896.4h-1.6M1997.4 924.8h-1.6M1997.4 953.1h-1.6M1997.4 981.5h-1.6M1997.4 1009.9h-1.6M1997.4 1038.2h-1.6" stroke="#222" stroke-width="0.45" fill="none"/>
<text x="2176" y="825.7" font-size="7.6" text-anchor="middle" fill="#111">Eddington Ratio Distribution vs. Black Hole Mass</text>
<text x="1994.3" y="842" font-size="6.4" text-anchor="end" fill="#111">10<tspan dy="-2.4" font-size="4.5">1</tspan></text>
<text x="1994.3" y="870.4" font-size="6.4" text-anchor="end" fill="#111">10<tspan dy="-2.4" font-size="4.5">0</tspan></text>
<text x="1994.3" y="898.7" font-size="6.4" text-anchor="end" fill="#111">10<tspan dy="-2.4" font-size="4.5">−1</tspan></text>
<text x="1994.3" y="927.1" font-size="6.4" text-anchor="end" fill="#111">10<tspan dy="-2.4" font-size="4.5">−2</tspan></text>
<text x="1994.3" y="955.4" font-size="6.4" text-anchor="end" fill="#111">10<tspan dy="-2.4" font-size="4.5">−3</tspan></text>
<text x="1994.3" y="983.8" font-size="6.4" text-anchor="end" fill="#111">10<tspan dy="-2.4" font-size="4.5">−4</tspan></text>
<text x="1994.3" y="1012.2" font-size="6.4" text-anchor="end" fill="#111">10<tspan dy="-2.4" font-size="4.5">−5</tspan></text>
<text x="1994.3" y="1040.5" font-size="6.4" text-anchor="end" fill="#111">10<tspan dy="-2.4" font-size="4.5">−6</tspan></text>
<text x="2042.5" y="1052.3" font-size="6.4" text-anchor="middle" fill="#111">10<tspan dy="-2.4" font-size="4.5">1</tspan></text>
<text x="2098.6" y="1052.3" font-size="6.4" text-anchor="middle" fill="#111">10<tspan dy="-2.4" font-size="4.5">3</tspan></text>
<text x="2155.3" y="1052.3" font-size="6.4" text-anchor="middle" fill="#111">10<tspan dy="-2.4" font-size="4.5">5</tspan></text>
<text x="2211.7" y="1052.3" font-size="6.4" text-anchor="middle" fill="#111">10<tspan dy="-2.4" font-size="4.5">7</tspan></text>
<text x="2268.4" y="1052.3" font-size="6.4" text-anchor="middle" fill="#111">10<tspan dy="-2.4" font-size="4.5">9</tspan></text>
<text x="2325.1" y="1052.3" font-size="6.4" text-anchor="middle" fill="#111">10<tspan dy="-2.4" font-size="4.5">11</tspan></text>
<text x="2176" y="1061.6" font-size="6.4" text-anchor="middle" fill="#111">Black Hole Mass (M<tspan dy="0.8" font-size="4.5">⊙</tspan><tspan dy="-0.8">)</tspan></text>
<text transform="translate(1973.6 936.8) rotate(-90)" font-size="6.4" text-anchor="middle" fill="#111">Eddington Ratio</text>
<path d="M2042.5 1200.3V1413.3M2098.6 1200.3V1413.3M2155.3 1200.3V1413.3M2211.7 1200.3V1413.3M2268.4 1200.3V1413.3M2325.1 1200.3V1413.3M1997.4 1209.8H2354.8M1997.4 1238.6H2354.8M1997.4 1267.4H2354.8M1997.4 1296.2H2354.8M1997.4 1325H2354.8M1997.4 1353.8H2354.8M1997.4 1382.6H2354.8M1997.4 1411.4H2354.8" stroke="#c2c2c2" stroke-width="0.75" fill="none"/>
<path d="M2220.9 1209.5 L2256.3 1209.6 L2262 1215 L2271.4 1223.8 L2288.3 1235.6 L2301.8 1244 L2308.5 1254.1 L2310.2 1265.9 L2318.6 1275 L2322 1292 L2188 1292 L2192.3 1275 L2197 1268 L2207 1254.5 L2203 1242.3 L2200.7 1228.9Z" fill="#1f77b4" stroke="#1f77b4" stroke-width="1.2" stroke-linejoin="round"/>
<g fill="#1f77b4" fill-opacity="0.6"><circle cx="2242.2" cy="1209.5" r="1.15"/><circle cx="2236.9" cy="1208.6" r="1.15"/><circle cx="2238" cy="1209.6" r="1.15"/><circle cx="2253.7" cy="1208.6" r="1.15"/><circle cx="2242.8" cy="1209.7" r="1.15"/><circle cx="2227.9" cy="1210.8" r="1.15"/><circle cx="2220.7" cy="1209.6" r="1.15"/><circle cx="2239" cy="1209.7" r="1.15"/><circle cx="2247.4" cy="1209.3" r="1.15"/><circle cx="2222.8" cy="1209.3" r="1.15"/><circle cx="2247.5" cy="1210" r="1.15"/><circle cx="2245.3" cy="1209.8" r="1.15"/><circle cx="2229.5" cy="1208.7" r="1.15"/><circle cx="2222.8" cy="1210.2" r="1.15"/><circle cx="2225.9" cy="1210.6" r="1.15"/><circle cx="2235.5" cy="1209.8" r="1.15"/><circle cx="2232.8" cy="1211.1" r="1.15"/><circle cx="2233" cy="1208.8" r="1.15"/><circle cx="2242.4" cy="1209.4" r="1.15"/><circle cx="2260.6" cy="1213" r="1.15"/><circle cx="2260.2" cy="1211.4" r="1.15"/><circle cx="2261.4" cy="1214.2" r="1.15"/><circle cx="2261.6" cy="1213.6" r="1.15"/><circle cx="2261.2" cy="1211.8" r="1.15"/><circle cx="2261.3" cy="1214.1" r="1.15"/><circle cx="2260.8" cy="1209.2" r="1.15"/><circle cx="2262.5" cy="1209.6" r="1.15"/><circle cx="2264.2" cy="1211.4" r="1.15"/><circle cx="2273.1" cy="1224.7" r="1.15"/><circle cx="2264.2" cy="1215.3" r="1.15"/><circle cx="2266.2" cy="1218.3" r="1.15"/><circle cx="2271.5" cy="1220.8" r="1.15"/><circle cx="2265.7" cy="1217.9" r="1.15"/><circle cx="2268" cy="1217.6" r="1.15"/><circle cx="2269.6" cy="1221.5" r="1.15"/><circle cx="2270.4" cy="1220.4" r="1.15"/><circle cx="2263.8" cy="1216.4" r="1.15"/><circle cx="2265" cy="1218.3" r="1.15"/><circle cx="2271.9" cy="1218.8" r="1.15"/><circle cx="2271.4" cy="1220.6" r="1.15"/><circle cx="2270.1" cy="1212.8" r="1.15"/><circle cx="2273.7" cy="1216.2" r="1.15"/><circle cx="2269.9" cy="1215.1" r="1.15"/><circle cx="2271.4" cy="1219.5" r="1.15"/><circle cx="2264.4" cy="1213.3" r="1.15"/><circle cx="2274" cy="1217.1" r="1.15"/><circle cx="2269.8" cy="1214.5" r="1.15"/><circle cx="2266.8" cy="1212.4" r="1.15"/><circle cx="2275.5" cy="1223.6" r="1.15"/><circle cx="2275.2" cy="1226.7" r="1.15"/><circle cx="2283.6" cy="1230.7" r="1.15"/><circle cx="2276.6" cy="1226.3" r="1.15"/><circle cx="2273.2" cy="1224.5" r="1.15"/><circle cx="2280.3" cy="1228.8" r="1.15"/><circle cx="2288" cy="1232.9" r="1.15"/><circle cx="2272.2" cy="1224.7" r="1.15"/><circle cx="2278.2" cy="1228.2" r="1.15"/><circle cx="2288.1" cy="1234" r="1.15"/><circle cx="2278.7" cy="1228.9" r="1.15"/><circle cx="2275.6" cy="1224.2" r="1.15"/><circle cx="2279.7" cy="1229" r="1.15"/><circle cx="2272.9" cy="1221.7" r="1.15"/><circle cx="2287.4" cy="1232.9" r="1.15"/><circle cx="2273.7" cy="1225.2" r="1.15"/><circle cx="2273.7" cy="1224.2" r="1.15"/><circle cx="2277.4" cy="1224.2" r="1.15"/><circle cx="2273.9" cy="1224" r="1.15"/><circle cx="2289.3" cy="1228.6" r="1.15"/><circle cx="2286.6" cy="1229" r="1.15"/><circle cx="2284.8" cy="1230.4" r="1.15"/><circle cx="2277.4" cy="1220.5" r="1.15"/><circle cx="2277.3" cy="1225.1" r="1.15"/><circle cx="2283.8" cy="1226.5" r="1.15"/><circle cx="2278.9" cy="1219.8" r="1.15"/><circle cx="2276.9" cy="1223.8" r="1.15"/><circle cx="2281.7" cy="1221.5" r="1.15"/><circle cx="2277.6" cy="1217.8" r="1.15"/><circle cx="2291.1" cy="1221.9" r="1.15"/><circle cx="2279.6" cy="1224" r="1.15"/><circle cx="2284.5" cy="1221.8" r="1.15"/><circle cx="2302.5" cy="1243.4" r="1.15"/><circle cx="2289.3" cy="1235.9" r="1.15"/><circle cx="2292.1" cy="1236.8" r="1.15"/><circle cx="2298.9" cy="1242.4" r="1.15"/><circle cx="2298.9" cy="1238.6" r="1.15"/><circle cx="2289.2" cy="1236.3" r="1.15"/><circle cx="2294.8" cy="1239.3" r="1.15"/><circle cx="2294.7" cy="1236.5" r="1.15"/><circle cx="2288.9" cy="1235.2" r="1.15"/><circle cx="2292.6" cy="1235.6" r="1.15"/><circle cx="2299.7" cy="1240.1" r="1.15"/><circle cx="2292.6" cy="1237.4" r="1.15"/><circle cx="2291.5" cy="1236.1" r="1.15"/><circle cx="2297" cy="1240.2" r="1.15"/><circle cx="2297.2" cy="1238.3" r="1.15"/><circle cx="2304.6" cy="1239" r="1.15"/><circle cx="2290.8" cy="1234.7" r="1.15"/><circle cx="2303" cy="1239.5" r="1.15"/><circle cx="2299" cy="1234.3" r="1.15"/><circle cx="2302.1" cy="1240.8" r="1.15"/><circle cx="2305.3" cy="1236.7" r="1.15"/><circle cx="2299.8" cy="1239.5" r="1.15"/><circle cx="2302.9" cy="1237.9" r="1.15"/><circle cx="2300.2" cy="1228.7" r="1.15"/><circle cx="2299.7" cy="1236.1" r="1.15"/><circle cx="2303.9" cy="1243.4" r="1.15"/><circle cx="2308.2" cy="1249" r="1.15"/><circle cx="2306.6" cy="1251.8" r="1.15"/><circle cx="2306" cy="1250.7" r="1.15"/><circle cx="2303.8" cy="1245.1" r="1.15"/><circle cx="2305.7" cy="1252.3" r="1.15"/><circle cx="2306.7" cy="1249.9" r="1.15"/><circle cx="2306.4" cy="1247.4" r="1.15"/><circle cx="2306.2" cy="1248.9" r="1.15"/><circle cx="2308" cy="1252.8" r="1.15"/><circle cx="2305.5" cy="1246.4" r="1.15"/><circle cx="2304.3" cy="1245.7" r="1.15"/><circle cx="2310.2" cy="1243.2" r="1.15"/><circle cx="2306.1" cy="1248.2" r="1.15"/><circle cx="2304.1" cy="1242" r="1.15"/><circle cx="2307.3" cy="1248.4" r="1.15"/><circle cx="2309.2" cy="1242" r="1.15"/><circle cx="2306.2" cy="1246.7" r="1.15"/><circle cx="2310.3" cy="1245.7" r="1.15"/><circle cx="2309.9" cy="1252.6" r="1.15"/><circle cx="2310.5" cy="1255.4" r="1.15"/><circle cx="2309.8" cy="1262.7" r="1.15"/><circle cx="2310" cy="1262.1" r="1.15"/><circle cx="2313.4" cy="1265.1" r="1.15"/><circle cx="2308.1" cy="1256" r="1.15"/><circle cx="2310.9" cy="1257.6" r="1.15"/><circle cx="2309.6" cy="1256.3" r="1.15"/><circle cx="2308.6" cy="1254.1" r="1.15"/><circle cx="2312.5" cy="1256" r="1.15"/><circle cx="2310.5" cy="1262.7" r="1.15"/><circle cx="2310.2" cy="1265.3" r="1.15"/><circle cx="2312.8" cy="1258.3" r="1.15"/><circle cx="2313.7" cy="1255.3" r="1.15"/><circle cx="2311.5" cy="1255.2" r="1.15"/><circle cx="2310.1" cy="1253.1" r="1.15"/><circle cx="2312.2" cy="1263.5" r="1.15"/><circle cx="2313.8" cy="1254.3" r="1.15"/><circle cx="2310.5" cy="1258" r="1.15"/><circle cx="2318.1" cy="1258.5" r="1.15"/><circle cx="2320.3" cy="1274.4" r="1.15"/><circle cx="2313.6" cy="1269.9" r="1.15"/><circle cx="2318.7" cy="1272.2" r="1.15"/><circle cx="2312.5" cy="1268" r="1.15"/><circle cx="2315.6" cy="1264.9" r="1.15"/><circle cx="2317.9" cy="1272.4" r="1.15"/><circle cx="2312.5" cy="1267.3" r="1.15"/><circle cx="2316.6" cy="1271.9" r="1.15"/><circle cx="2311.1" cy="1266.6" r="1.15"/><circle cx="2316.9" cy="1270.8" r="1.15"/><circle cx="2310.9" cy="1265.3" r="1.15"/><circle cx="2311.9" cy="1264.9" r="1.15"/><circle cx="2314.4" cy="1261.3" r="1.15"/><circle cx="2321" cy="1271.3" r="1.15"/><circle cx="2322.1" cy="1271.2" r="1.15"/><circle cx="2318" cy="1264.3" r="1.15"/><circle cx="2316.9" cy="1263.6" r="1.15"/><circle cx="2321.9" cy="1267.2" r="1.15"/><circle cx="2313.9" cy="1266.4" r="1.15"/><circle cx="2323.7" cy="1267.5" r="1.15"/><circle cx="2321.5" cy="1279.7" r="1.15"/><circle cx="2320.6" cy="1275.4" r="1.15"/><circle cx="2320.1" cy="1276.9" r="1.15"/><circle cx="2320" cy="1278.3" r="1.15"/><circle cx="2319.3" cy="1279.6" r="1.15"/><circle cx="2319.9" cy="1278.3" r="1.15"/><circle cx="2319.6" cy="1277.3" r="1.15"/><circle cx="2322.1" cy="1278.7" r="1.15"/><circle cx="2323.4" cy="1279.8" r="1.15"/><circle cx="2326.3" cy="1276.3" r="1.15"/><circle cx="2189.8" cy="1274.6" r="1.15"/><circle cx="2191.6" cy="1275.1" r="1.15"/><circle cx="2189.9" cy="1278.6" r="1.15"/><circle cx="2188.4" cy="1279.9" r="1.15"/><circle cx="2190.1" cy="1279.6" r="1.15"/><circle cx="2187.3" cy="1274.2" r="1.15"/><circle cx="2193.2" cy="1274.5" r="1.15"/><circle cx="2194.8" cy="1270.6" r="1.15"/><circle cx="2196.2" cy="1268.3" r="1.15"/><circle cx="2192.7" cy="1272" r="1.15"/><circle cx="2195.3" cy="1268.1" r="1.15"/><circle cx="2193.4" cy="1274.3" r="1.15"/><circle cx="2193.2" cy="1271.1" r="1.15"/><circle cx="2191.4" cy="1272" r="1.15"/><circle cx="2190.5" cy="1267.8" r="1.15"/><circle cx="2191.4" cy="1272.8" r="1.15"/><circle cx="2189.5" cy="1267.7" r="1.15"/><circle cx="2191.1" cy="1268.9" r="1.15"/><circle cx="2188.5" cy="1270.9" r="1.15"/><circle cx="2197.2" cy="1262.6" r="1.15"/><circle cx="2203.2" cy="1254.2" r="1.15"/><circle cx="2199.1" cy="1262.5" r="1.15"/><circle cx="2199" cy="1264.4" r="1.15"/><circle cx="2206.1" cy="1256.2" r="1.15"/><circle cx="2197.4" cy="1267.2" r="1.15"/><circle cx="2201.4" cy="1262.1" r="1.15"/><circle cx="2206.8" cy="1255.5" r="1.15"/><circle cx="2197.7" cy="1261.6" r="1.15"/><circle cx="2200.9" cy="1260.6" r="1.15"/><circle cx="2200.2" cy="1263.2" r="1.15"/><circle cx="2201.2" cy="1259.8" r="1.15"/><circle cx="2198" cy="1263.7" r="1.15"/><circle cx="2203.2" cy="1259.2" r="1.15"/><circle cx="2205.7" cy="1257.5" r="1.15"/><circle cx="2198.6" cy="1264.9" r="1.15"/><circle cx="2203" cy="1253.8" r="1.15"/><circle cx="2201.3" cy="1258.2" r="1.15"/><circle cx="2197.9" cy="1257.8" r="1.15"/><circle cx="2201.3" cy="1254.9" r="1.15"/><circle cx="2194.4" cy="1265.4" r="1.15"/><circle cx="2199.2" cy="1254.4" r="1.15"/><circle cx="2199.4" cy="1254.5" r="1.15"/><circle cx="2199.7" cy="1252.1" r="1.15"/><circle cx="2193.3" cy="1254.2" r="1.15"/><circle cx="2196.8" cy="1257.3" r="1.15"/><circle cx="2200.4" cy="1244.5" r="1.15"/><circle cx="2204.7" cy="1249.6" r="1.15"/><circle cx="2204.9" cy="1249.6" r="1.15"/><circle cx="2200.5" cy="1249.3" r="1.15"/><circle cx="2205.8" cy="1248.5" r="1.15"/><circle cx="2204" cy="1245.1" r="1.15"/><circle cx="2201.2" cy="1248.3" r="1.15"/><circle cx="2202.7" cy="1242.6" r="1.15"/><circle cx="2205" cy="1245.2" r="1.15"/><circle cx="2204.6" cy="1250.6" r="1.15"/><circle cx="2205.8" cy="1253.3" r="1.15"/><circle cx="2201.7" cy="1251.5" r="1.15"/><circle cx="2197.8" cy="1250.4" r="1.15"/><circle cx="2198.7" cy="1256.1" r="1.15"/><circle cx="2201.3" cy="1253.5" r="1.15"/><circle cx="2203" cy="1251.2" r="1.15"/><circle cx="2200" cy="1247.2" r="1.15"/><circle cx="2197.1" cy="1246.1" r="1.15"/><circle cx="2201.1" cy="1248.3" r="1.15"/><circle cx="2200.3" cy="1243.3" r="1.15"/><circle cx="2202" cy="1241.4" r="1.15"/><circle cx="2201.6" cy="1241.4" r="1.15"/><circle cx="2201.9" cy="1236.4" r="1.15"/><circle cx="2197.4" cy="1232.3" r="1.15"/><circle cx="2200.7" cy="1231.8" r="1.15"/><circle cx="2202.2" cy="1235.2" r="1.15"/><circle cx="2200.5" cy="1232.9" r="1.15"/><circle cx="2201.9" cy="1239" r="1.15"/><circle cx="2200.4" cy="1239.4" r="1.15"/><circle cx="2202.4" cy="1237" r="1.15"/><circle cx="2201.3" cy="1240.6" r="1.15"/><circle cx="2200.7" cy="1234.2" r="1.15"/><circle cx="2202.9" cy="1239.7" r="1.15"/><circle cx="2192" cy="1235.2" r="1.15"/><circle cx="2196.8" cy="1236.4" r="1.15"/><circle cx="2199.9" cy="1236.7" r="1.15"/><circle cx="2194.3" cy="1230.1" r="1.15"/><circle cx="2198.3" cy="1234.3" r="1.15"/><circle cx="2192.5" cy="1239.9" r="1.15"/><circle cx="2192.9" cy="1243.7" r="1.15"/><circle cx="2197.4" cy="1231.4" r="1.15"/><circle cx="2213.5" cy="1216" r="1.15"/><circle cx="2216.4" cy="1213.9" r="1.15"/><circle cx="2206.1" cy="1222.8" r="1.15"/><circle cx="2201.2" cy="1223.2" r="1.15"/><circle cx="2202.7" cy="1224.9" r="1.15"/><circle cx="2202.9" cy="1226.6" r="1.15"/><circle cx="2213.5" cy="1215.8" r="1.15"/><circle cx="2203.9" cy="1226.3" r="1.15"/><circle cx="2211" cy="1216.2" r="1.15"/><circle cx="2207.5" cy="1220" r="1.15"/><circle cx="2203.8" cy="1224.5" r="1.15"/><circle cx="2214.4" cy="1213.3" r="1.15"/><circle cx="2201.3" cy="1224.9" r="1.15"/><circle cx="2204.3" cy="1219.9" r="1.15"/><circle cx="2214" cy="1216" r="1.15"/><circle cx="2211.4" cy="1219.2" r="1.15"/><circle cx="2208.2" cy="1216.6" r="1.15"/><circle cx="2206.4" cy="1222.6" r="1.15"/><circle cx="2219.5" cy="1209.2" r="1.15"/><circle cx="2207.3" cy="1214.8" r="1.15"/><circle cx="2220" cy="1209.3" r="1.15"/><circle cx="2208.1" cy="1219.6" r="1.15"/><circle cx="2206.1" cy="1214.7" r="1.15"/><circle cx="2211.4" cy="1211.7" r="1.15"/><circle cx="2214.8" cy="1212.1" r="1.15"/><circle cx="2213.2" cy="1216.1" r="1.15"/><circle cx="2200.2" cy="1218.1" r="1.15"/><circle cx="2203.2" cy="1225.1" r="1.15"/><circle cx="2198.6" cy="1224" r="1.15"/><circle cx="2202.4" cy="1221.9" r="1.15"/><circle cx="2209.8" cy="1210.4" r="1.15"/><circle cx="2211.9" cy="1214.2" r="1.15"/><circle cx="2214" cy="1212.7" r="1.15"/><circle cx="2208.9" cy="1213.2" r="1.15"/><circle cx="2207.5" cy="1216.7" r="1.15"/><circle cx="2199.6" cy="1219.1" r="1.15"/><circle cx="2197.7" cy="1222.7" r="1.15"/><circle cx="2204" cy="1222.3" r="1.15"/><circle cx="2199.6" cy="1226" r="1.15"/><circle cx="2209.5" cy="1214.5" r="1.15"/><circle cx="2013.9" cy="1214" r="1.15"/><circle cx="2013.9" cy="1228.3" r="1.15"/><circle cx="2013.9" cy="1238.8" r="1.15"/><circle cx="2332.4" cy="1267.4" r="1.15"/><circle cx="2188.1" cy="1252.2" r="1.15"/><circle cx="2192.3" cy="1237.6" r="1.15"/><circle cx="2196" cy="1236.3" r="1.15"/><circle cx="2199" cy="1231.3" r="1.15"/><circle cx="2197.5" cy="1246.3" r="1.15"/><circle cx="2194" cy="1262.3" r="1.15"/><circle cx="2190.5" cy="1264.8" r="1.15"/><circle cx="2260" cy="1211.3" r="1.15"/><circle cx="2263" cy="1213.8" r="1.15"/><circle cx="2266" cy="1214.3" r="1.15"/><circle cx="2272" cy="1219.3" r="1.15"/><circle cx="2275" cy="1218.8" r="1.15"/><circle cx="2296" cy="1233.3" r="1.15"/><circle cx="2305" cy="1240.3" r="1.15"/><circle cx="2310" cy="1249.3" r="1.15"/></g>
<path d="M2042.5 1200.3V1413.3M2098.6 1200.3V1413.3M2155.3 1200.3V1413.3M2211.7 1200.3V1413.3M2268.4 1200.3V1413.3M2325.1 1200.3V1413.3M1997.4 1209.8H2354.8M1997.4 1238.6H2354.8M1997.4 1267.4H2354.8M1997.4 1296.2H2354.8M1997.4 1325H2354.8M1997.4 1353.8H2354.8M1997.4 1382.6H2354.8M1997.4 1411.4H2354.8" stroke="#d8d8d8" stroke-width="0.6" fill="none" opacity="0.45"/>
<rect x="1997.4" y="1200.3" width="357.4" height="213.0" fill="none" stroke="#333" stroke-width="0.7"/>
<path d="M2042.5 1413.3v1.6M2098.6 1413.3v1.6M2155.3 1413.3v1.6M2211.7 1413.3v1.6M2268.4 1413.3v1.6M2325.1 1413.3v1.6M1997.4 1209.8h-1.6M1997.4 1238.6h-1.6M1997.4 1267.4h-1.6M1997.4 1296.2h-1.6M1997.4 1325h-1.6M1997.4 1353.8h-1.6M1997.4 1382.6h-1.6M1997.4 1411.4h-1.6" stroke="#222" stroke-width="0.45" fill="none"/>
<text x="2176" y="1196.5" font-size="7.6" text-anchor="middle" fill="#111">Eddington Ratio Distribution vs. Black Hole Mass</text>
<text x="1994.3" y="1212.1" font-size="6.4" text-anchor="end" fill="#111">10<tspan dy="-2.4" font-size="4.5">1</tspan></text>
<text x="1994.3" y="1240.9" font-size="6.4" text-anchor="end" fill="#111">10<tspan dy="-2.4" font-size="4.5">0</tspan></text>
<text x="1994.3" y="1269.7" font-size="6.4" text-anchor="end" fill="#111">10<tspan dy="-2.4" font-size="4.5">−1</tspan></text>
<text x="1994.3" y="1298.5" font-size="6.4" text-anchor="end" fill="#111">10<tspan dy="-2.4" font-size="4.5">−2</tspan></text>
<text x="1994.3" y="1327.3" font-size="6.4" text-anchor="end" fill="#111">10<tspan dy="-2.4" font-size="4.5">−3</tspan></text>
<text x="1994.3" y="1356.1" font-size="6.4" text-anchor="end" fill="#111">10<tspan dy="-2.4" font-size="4.5">−4</tspan></text>
<text x="1994.3" y="1384.9" font-size="6.4" text-anchor="end" fill="#111">10<tspan dy="-2.4" font-size="4.5">−5</tspan></text>
<text x="1994.3" y="1413.7" font-size="6.4" text-anchor="end" fill="#111">10<tspan dy="-2.4" font-size="4.5">−6</tspan></text>
<text x="2042.5" y="1422.2" font-size="6.4" text-anchor="middle" fill="#111">10<tspan dy="-2.4" font-size="4.5">1</tspan></text>
<text x="2098.6" y="1422.2" font-size="6.4" text-anchor="middle" fill="#111">10<tspan dy="-2.4" font-size="4.5">3</tspan></text>
<text x="2155.3" y="1422.2" font-size="6.4" text-anchor="middle" fill="#111">10<tspan dy="-2.4" font-size="4.5">5</tspan></text>
<text x="2211.7" y="1422.2" font-size="6.4" text-anchor="middle" fill="#111">10<tspan dy="-2.4" font-size="4.5">7</tspan></text>
<text x="2268.4" y="1422.2" font-size="6.4" text-anchor="middle" fill="#111">10<tspan dy="-2.4" font-size="4.5">9</tspan></text>
<text x="2325.1" y="1422.2" font-size="6.4" text-anchor="middle" fill="#111">10<tspan dy="-2.4" font-size="4.5">11</tspan></text>
<text x="2176" y="1431.5" font-size="6.4" text-anchor="middle" fill="#111">Black Hole Mass (M<tspan dy="0.8" font-size="4.5">⊙</tspan><tspan dy="-0.8">)</tspan></text>
<text transform="translate(1973.6 1306.7) rotate(-90)" font-size="6.4" text-anchor="middle" fill="#111">Eddington Ratio</text>
</svg>
</body>
</html>
